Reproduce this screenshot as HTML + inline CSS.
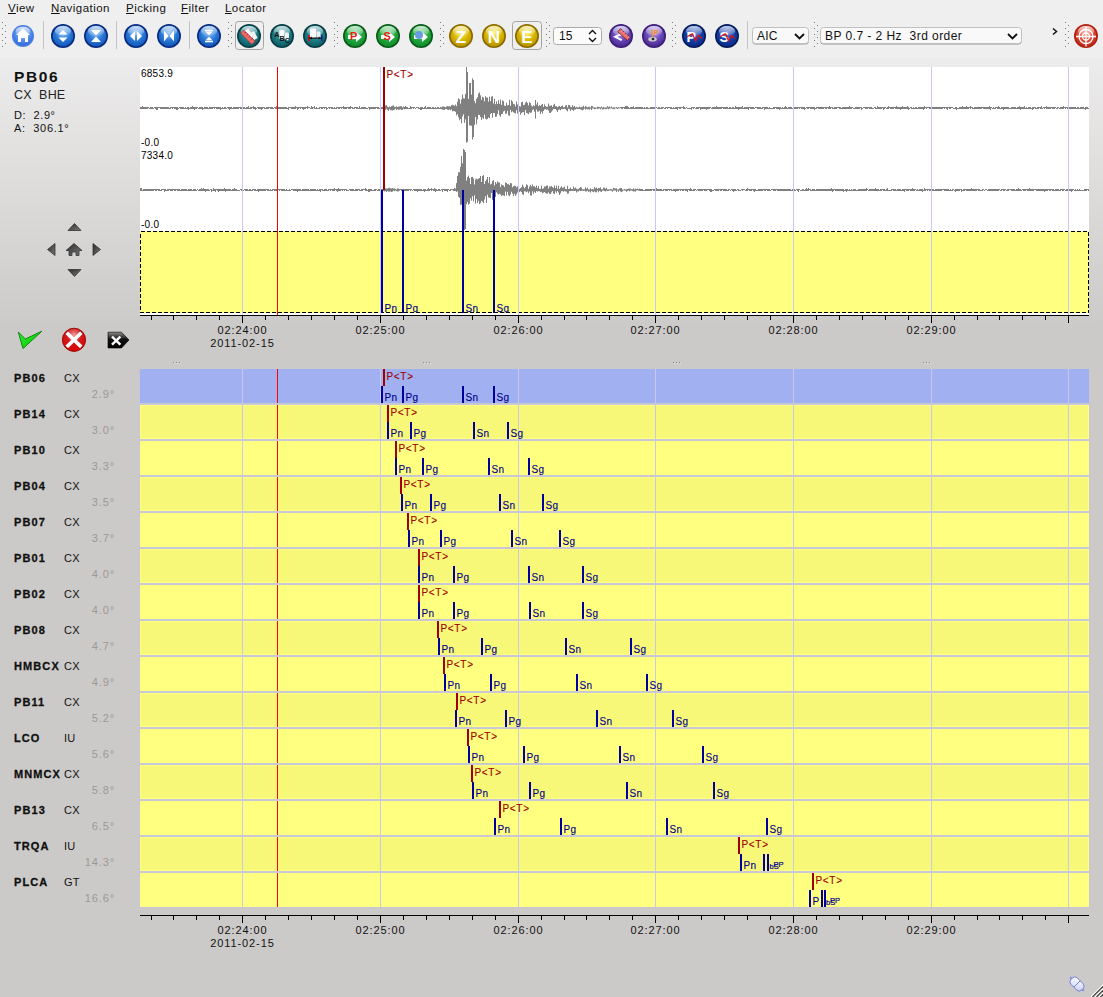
<!DOCTYPE html><html><head><meta charset="utf-8"><style>
html,body{margin:0;padding:0;}
body{width:1103px;height:997px;overflow:hidden;position:relative;background:#cccac8;font-family:"Liberation Sans", sans-serif;}
.t{position:absolute;white-space:pre;line-height:1;}
svg{position:absolute;left:0;top:0;}
</style></head><body>

<div style="position:absolute;left:0;top:0;width:1103px;height:58px;background:#efefef"></div>
<div style="position:absolute;left:0;top:58px;width:1103px;height:272px;background:linear-gradient(#edecec,#cccac8)"></div>
<div class="t" style="left:14px;top:373px;font-size:11px;font-weight:bold;color:#111;letter-spacing:1.1px;-webkit-text-stroke:0.3px #111">PB06</div>
<div class="t" style="left:64px;top:373px;font-size:11px;color:#111;letter-spacing:0.3px">CX</div>
<div class="t" style="right:988px;top:389px;font-size:11px;color:#999;letter-spacing:0.9px">2.9°</div>
<div class="t" style="left:14px;top:409px;font-size:11px;font-weight:bold;color:#111;letter-spacing:1.1px;-webkit-text-stroke:0.3px #111">PB14</div>
<div class="t" style="left:64px;top:409px;font-size:11px;color:#111;letter-spacing:0.3px">CX</div>
<div class="t" style="right:988px;top:425px;font-size:11px;color:#999;letter-spacing:0.9px">3.0°</div>
<div class="t" style="left:14px;top:445px;font-size:11px;font-weight:bold;color:#111;letter-spacing:1.1px;-webkit-text-stroke:0.3px #111">PB10</div>
<div class="t" style="left:64px;top:445px;font-size:11px;color:#111;letter-spacing:0.3px">CX</div>
<div class="t" style="right:988px;top:461px;font-size:11px;color:#999;letter-spacing:0.9px">3.3°</div>
<div class="t" style="left:14px;top:481px;font-size:11px;font-weight:bold;color:#111;letter-spacing:1.1px;-webkit-text-stroke:0.3px #111">PB04</div>
<div class="t" style="left:64px;top:481px;font-size:11px;color:#111;letter-spacing:0.3px">CX</div>
<div class="t" style="right:988px;top:497px;font-size:11px;color:#999;letter-spacing:0.9px">3.5°</div>
<div class="t" style="left:14px;top:517px;font-size:11px;font-weight:bold;color:#111;letter-spacing:1.1px;-webkit-text-stroke:0.3px #111">PB07</div>
<div class="t" style="left:64px;top:517px;font-size:11px;color:#111;letter-spacing:0.3px">CX</div>
<div class="t" style="right:988px;top:533px;font-size:11px;color:#999;letter-spacing:0.9px">3.7°</div>
<div class="t" style="left:14px;top:553px;font-size:11px;font-weight:bold;color:#111;letter-spacing:1.1px;-webkit-text-stroke:0.3px #111">PB01</div>
<div class="t" style="left:64px;top:553px;font-size:11px;color:#111;letter-spacing:0.3px">CX</div>
<div class="t" style="right:988px;top:569px;font-size:11px;color:#999;letter-spacing:0.9px">4.0°</div>
<div class="t" style="left:14px;top:589px;font-size:11px;font-weight:bold;color:#111;letter-spacing:1.1px;-webkit-text-stroke:0.3px #111">PB02</div>
<div class="t" style="left:64px;top:589px;font-size:11px;color:#111;letter-spacing:0.3px">CX</div>
<div class="t" style="right:988px;top:605px;font-size:11px;color:#999;letter-spacing:0.9px">4.0°</div>
<div class="t" style="left:14px;top:625px;font-size:11px;font-weight:bold;color:#111;letter-spacing:1.1px;-webkit-text-stroke:0.3px #111">PB08</div>
<div class="t" style="left:64px;top:625px;font-size:11px;color:#111;letter-spacing:0.3px">CX</div>
<div class="t" style="right:988px;top:641px;font-size:11px;color:#999;letter-spacing:0.9px">4.7°</div>
<div class="t" style="left:14px;top:661px;font-size:11px;font-weight:bold;color:#111;letter-spacing:1.1px;-webkit-text-stroke:0.3px #111">HMBCX</div>
<div class="t" style="left:64px;top:661px;font-size:11px;color:#111;letter-spacing:0.3px">CX</div>
<div class="t" style="right:988px;top:677px;font-size:11px;color:#999;letter-spacing:0.9px">4.9°</div>
<div class="t" style="left:14px;top:697px;font-size:11px;font-weight:bold;color:#111;letter-spacing:1.1px;-webkit-text-stroke:0.3px #111">PB11</div>
<div class="t" style="left:64px;top:697px;font-size:11px;color:#111;letter-spacing:0.3px">CX</div>
<div class="t" style="right:988px;top:713px;font-size:11px;color:#999;letter-spacing:0.9px">5.2°</div>
<div class="t" style="left:14px;top:733px;font-size:11px;font-weight:bold;color:#111;letter-spacing:1.1px;-webkit-text-stroke:0.3px #111">LCO</div>
<div class="t" style="left:64px;top:733px;font-size:11px;color:#111;letter-spacing:0.3px">IU</div>
<div class="t" style="right:988px;top:749px;font-size:11px;color:#999;letter-spacing:0.9px">5.6°</div>
<div class="t" style="left:14px;top:769px;font-size:11px;font-weight:bold;color:#111;letter-spacing:1.1px;-webkit-text-stroke:0.3px #111">MNMCX</div>
<div class="t" style="left:64px;top:769px;font-size:11px;color:#111;letter-spacing:0.3px">CX</div>
<div class="t" style="right:988px;top:785px;font-size:11px;color:#999;letter-spacing:0.9px">5.8°</div>
<div class="t" style="left:14px;top:805px;font-size:11px;font-weight:bold;color:#111;letter-spacing:1.1px;-webkit-text-stroke:0.3px #111">PB13</div>
<div class="t" style="left:64px;top:805px;font-size:11px;color:#111;letter-spacing:0.3px">CX</div>
<div class="t" style="right:988px;top:821px;font-size:11px;color:#999;letter-spacing:0.9px">6.5°</div>
<div class="t" style="left:14px;top:841px;font-size:11px;font-weight:bold;color:#111;letter-spacing:1.1px;-webkit-text-stroke:0.3px #111">TRQA</div>
<div class="t" style="left:64px;top:841px;font-size:11px;color:#111;letter-spacing:0.3px">IU</div>
<div class="t" style="right:988px;top:857px;font-size:11px;color:#999;letter-spacing:0.9px">14.3°</div>
<div class="t" style="left:14px;top:877px;font-size:11px;font-weight:bold;color:#111;letter-spacing:1.1px;-webkit-text-stroke:0.3px #111">PLCA</div>
<div class="t" style="left:64px;top:877px;font-size:11px;color:#111;letter-spacing:0.3px">GT</div>
<div class="t" style="right:988px;top:893px;font-size:11px;color:#999;letter-spacing:0.9px">16.6°</div>
<svg width="1103" height="997" viewBox="0 0 1103 997"><rect x="2" y="22" width="1" height="1" fill="#7a7a7a"/><rect x="5" y="25" width="1" height="1" fill="#7a7a7a"/><rect x="2" y="28" width="1" height="1" fill="#7a7a7a"/><rect x="5" y="31" width="1" height="1" fill="#7a7a7a"/><rect x="2" y="34" width="1" height="1" fill="#7a7a7a"/><rect x="5" y="37" width="1" height="1" fill="#7a7a7a"/><rect x="2" y="40" width="1" height="1" fill="#7a7a7a"/><rect x="5" y="43" width="1" height="1" fill="#7a7a7a"/><rect x="2" y="46" width="1" height="1" fill="#7a7a7a"/><defs><radialGradient id="g0" cx="0.5" cy="0.35" r="0.65"><stop offset="0" stop-color="#9cc0fa"/><stop offset="0.55" stop-color="#5d92ee"/><stop offset="1" stop-color="#2f6ad8"/></radialGradient>
<linearGradient id="g0h" x1="0" y1="0" x2="0" y2="1"><stop offset="0" stop-color="#fff" stop-opacity="0.75"/><stop offset="1" stop-color="#fff" stop-opacity="0.05"/></linearGradient></defs>
<circle cx="23" cy="36" r="11" fill="#4a7fe0"/>
<circle cx="23" cy="36" r="9.4" fill="url(#g0)"/>
<ellipse cx="23" cy="31.38" rx="7.48" ry="4.62" fill="url(#g0h)"/><path d="M23 28.5 L30 35 L28 35 L28 42 L25 42 L25 38 L21 38 L21 42 L18 42 L18 35 L16 35 Z" fill="#fff"/><rect x="43" y="21" width="1" height="28" fill="#c4c4c4"/><defs><radialGradient id="g1" cx="0.5" cy="0.35" r="0.65"><stop offset="0" stop-color="#90c0f4"/><stop offset="0.55" stop-color="#2a7ad8"/><stop offset="1" stop-color="#1256b8"/></radialGradient>
<linearGradient id="g1h" x1="0" y1="0" x2="0" y2="1"><stop offset="0" stop-color="#fff" stop-opacity="0.75"/><stop offset="1" stop-color="#fff" stop-opacity="0.05"/></linearGradient></defs>
<circle cx="63" cy="36" r="12" fill="#0a2a80"/>
<circle cx="63" cy="36" r="10.4" fill="url(#g1)"/>
<ellipse cx="63" cy="30.96" rx="8.16" ry="5.04" fill="url(#g1h)"/><path d="M63 30 L67.5 34.5 L58.5 34.5 Z M63 42 L67.5 37.5 L58.5 37.5 Z" fill="#fff"/><defs><radialGradient id="g2" cx="0.5" cy="0.35" r="0.65"><stop offset="0" stop-color="#90c0f4"/><stop offset="0.55" stop-color="#2a7ad8"/><stop offset="1" stop-color="#1256b8"/></radialGradient>
<linearGradient id="g2h" x1="0" y1="0" x2="0" y2="1"><stop offset="0" stop-color="#fff" stop-opacity="0.75"/><stop offset="1" stop-color="#fff" stop-opacity="0.05"/></linearGradient></defs>
<circle cx="96" cy="36" r="12" fill="#0a2a80"/>
<circle cx="96" cy="36" r="10.4" fill="url(#g2)"/>
<ellipse cx="96" cy="30.96" rx="8.16" ry="5.04" fill="url(#g2h)"/><path d="M91 30 L101 30 L96 35.5 Z M91 42 L101 42 L96 36.5 Z" fill="#fff"/><rect x="116" y="21" width="1" height="28" fill="#c4c4c4"/><defs><radialGradient id="g3" cx="0.5" cy="0.35" r="0.65"><stop offset="0" stop-color="#90c0f4"/><stop offset="0.55" stop-color="#2a7ad8"/><stop offset="1" stop-color="#1256b8"/></radialGradient>
<linearGradient id="g3h" x1="0" y1="0" x2="0" y2="1"><stop offset="0" stop-color="#fff" stop-opacity="0.75"/><stop offset="1" stop-color="#fff" stop-opacity="0.05"/></linearGradient></defs>
<circle cx="136" cy="36" r="12" fill="#0a2a80"/>
<circle cx="136" cy="36" r="10.4" fill="url(#g3)"/>
<ellipse cx="136" cy="30.96" rx="8.16" ry="5.04" fill="url(#g3h)"/><path d="M130 36 L135 31 L135 41 Z M142 36 L137 31 L137 41 Z" fill="#fff"/><defs><radialGradient id="g4" cx="0.5" cy="0.35" r="0.65"><stop offset="0" stop-color="#90c0f4"/><stop offset="0.55" stop-color="#2a7ad8"/><stop offset="1" stop-color="#1256b8"/></radialGradient>
<linearGradient id="g4h" x1="0" y1="0" x2="0" y2="1"><stop offset="0" stop-color="#fff" stop-opacity="0.75"/><stop offset="1" stop-color="#fff" stop-opacity="0.05"/></linearGradient></defs>
<circle cx="169" cy="36" r="12" fill="#0a2a80"/>
<circle cx="169" cy="36" r="10.4" fill="url(#g4)"/>
<ellipse cx="169" cy="30.96" rx="8.16" ry="5.04" fill="url(#g4h)"/><path d="M164 30.5 L168.5 36 L164 41.5 Z M174 30.5 L169.5 36 L174 41.5 Z" fill="#fff"/><rect x="189" y="21" width="1" height="28" fill="#c4c4c4"/><defs><radialGradient id="g5" cx="0.5" cy="0.35" r="0.65"><stop offset="0" stop-color="#90c0f4"/><stop offset="0.55" stop-color="#2a7ad8"/><stop offset="1" stop-color="#1256b8"/></radialGradient>
<linearGradient id="g5h" x1="0" y1="0" x2="0" y2="1"><stop offset="0" stop-color="#fff" stop-opacity="0.75"/><stop offset="1" stop-color="#fff" stop-opacity="0.05"/></linearGradient></defs>
<circle cx="209" cy="36" r="12" fill="#0a2a80"/>
<circle cx="209" cy="36" r="10.4" fill="url(#g5)"/>
<ellipse cx="209" cy="30.96" rx="8.16" ry="5.04" fill="url(#g5h)"/><path d="M205.3 31.6 L212.7 31.6 L209 35.2 Z M205.3 40.4 L212.7 40.4 L209 36.8 Z" fill="#fff"/><rect x="205" y="29.8" width="8" height="1.3" fill="#fff"/><rect x="205" y="41" width="8" height="1.3" fill="#fff"/><rect x="228" y="22" width="1" height="1" fill="#7a7a7a"/><rect x="231" y="25" width="1" height="1" fill="#7a7a7a"/><rect x="228" y="28" width="1" height="1" fill="#7a7a7a"/><rect x="231" y="31" width="1" height="1" fill="#7a7a7a"/><rect x="228" y="34" width="1" height="1" fill="#7a7a7a"/><rect x="231" y="37" width="1" height="1" fill="#7a7a7a"/><rect x="228" y="40" width="1" height="1" fill="#7a7a7a"/><rect x="231" y="43" width="1" height="1" fill="#7a7a7a"/><rect x="228" y="46" width="1" height="1" fill="#7a7a7a"/><rect x="235.5" y="21.5" width="28" height="28" rx="3" fill="#efefef" stroke="#a4a4a4"/><defs><radialGradient id="t0" cx="0.5" cy="0.35" r="0.65"><stop offset="0" stop-color="#7ab8be"/><stop offset="0.55" stop-color="#1e7f88"/><stop offset="1" stop-color="#0d5a62"/></radialGradient>
<linearGradient id="t0h" x1="0" y1="0" x2="0" y2="1"><stop offset="0" stop-color="#fff" stop-opacity="0.75"/><stop offset="1" stop-color="#fff" stop-opacity="0.05"/></linearGradient></defs>
<circle cx="249" cy="36" r="12" fill="#083c44"/>
<circle cx="249" cy="36" r="10.4" fill="url(#t0)"/>
<ellipse cx="249" cy="30.96" rx="8.16" ry="5.04" fill="url(#t0h)"/><defs><radialGradient id="t1" cx="0.5" cy="0.35" r="0.65"><stop offset="0" stop-color="#7ab8be"/><stop offset="0.55" stop-color="#1e7f88"/><stop offset="1" stop-color="#0d5a62"/></radialGradient>
<linearGradient id="t1h" x1="0" y1="0" x2="0" y2="1"><stop offset="0" stop-color="#fff" stop-opacity="0.75"/><stop offset="1" stop-color="#fff" stop-opacity="0.05"/></linearGradient></defs>
<circle cx="282" cy="36" r="12" fill="#083c44"/>
<circle cx="282" cy="36" r="10.4" fill="url(#t1)"/>
<ellipse cx="282" cy="30.96" rx="8.16" ry="5.04" fill="url(#t1h)"/><defs><radialGradient id="t2" cx="0.5" cy="0.35" r="0.65"><stop offset="0" stop-color="#7ab8be"/><stop offset="0.55" stop-color="#1e7f88"/><stop offset="1" stop-color="#0d5a62"/></radialGradient>
<linearGradient id="t2h" x1="0" y1="0" x2="0" y2="1"><stop offset="0" stop-color="#fff" stop-opacity="0.75"/><stop offset="1" stop-color="#fff" stop-opacity="0.05"/></linearGradient></defs>
<circle cx="315" cy="36" r="12" fill="#083c44"/>
<circle cx="315" cy="36" r="10.4" fill="url(#t2)"/>
<ellipse cx="315" cy="30.96" rx="8.16" ry="5.04" fill="url(#t2h)"/><g transform="rotate(-8 249 36)"><rect x="246" y="29.5" width="5.5" height="9.5" rx="1" fill="#fafafa" transform="rotate(-20 248 34)"/><rect x="251.5" y="32.5" width="4.5" height="8" rx="1" fill="#f0f0f0" transform="rotate(-20 253 36)"/></g><g transform="rotate(45 248 37)"><rect x="240" y="35" width="16" height="4.5" fill="#f06868" stroke="#902020" stroke-width="0.5"/><path d="M243 35 V36.5 M246 35 V36.5 M249 35 V36.5 M252 35 V36.5" stroke="#600" stroke-width="0.7"/></g><rect x="279.3" y="30" width="5.2" height="9.2" rx="1" fill="#fafafa"/><rect x="285" y="32.5" width="4" height="7.8" rx="1" fill="#f0f0f0"/><text x="274.3" y="37" font-size="7" font-weight="bold" fill="#111" font-family="Liberation Sans">A</text><text x="279.6" y="40.6" font-size="7" font-weight="bold" fill="#111" font-family="Liberation Sans">B</text><text x="284.8" y="42.6" font-size="7" font-weight="bold" fill="#111" font-family="Liberation Sans">C</text><rect x="310" y="28.5" width="6" height="9.5" rx="1" fill="#fafafa"/><rect x="316.5" y="31.5" width="4" height="7" rx="1" fill="#f0f0f0"/><rect x="308" y="35" width="1.6" height="6" fill="#e00"/><rect x="321" y="35" width="1.6" height="6" fill="#22a"/><rect x="309" y="37.5" width="13" height="1.2" fill="#111"/><path d="M310 38.1 L312 36.6 L312 39.6 Z M320.6 38.1 L318.6 36.6 L318.6 39.6 Z" fill="#111"/><rect x="334" y="22" width="1" height="1" fill="#7a7a7a"/><rect x="337" y="25" width="1" height="1" fill="#7a7a7a"/><rect x="334" y="28" width="1" height="1" fill="#7a7a7a"/><rect x="337" y="31" width="1" height="1" fill="#7a7a7a"/><rect x="334" y="34" width="1" height="1" fill="#7a7a7a"/><rect x="337" y="37" width="1" height="1" fill="#7a7a7a"/><rect x="334" y="40" width="1" height="1" fill="#7a7a7a"/><rect x="337" y="43" width="1" height="1" fill="#7a7a7a"/><rect x="334" y="46" width="1" height="1" fill="#7a7a7a"/><defs><radialGradient id="n0" cx="0.5" cy="0.35" r="0.65"><stop offset="0" stop-color="#8fe0a0"/><stop offset="0.55" stop-color="#22a83e"/><stop offset="1" stop-color="#0f8a2a"/></radialGradient>
<linearGradient id="n0h" x1="0" y1="0" x2="0" y2="1"><stop offset="0" stop-color="#fff" stop-opacity="0.75"/><stop offset="1" stop-color="#fff" stop-opacity="0.05"/></linearGradient></defs>
<circle cx="355" cy="36" r="12" fill="#0a5a1a"/>
<circle cx="355" cy="36" r="10.4" fill="url(#n0)"/>
<ellipse cx="355" cy="30.96" rx="8.16" ry="5.04" fill="url(#n0h)"/><defs><radialGradient id="n1" cx="0.5" cy="0.35" r="0.65"><stop offset="0" stop-color="#8fe0a0"/><stop offset="0.55" stop-color="#22a83e"/><stop offset="1" stop-color="#0f8a2a"/></radialGradient>
<linearGradient id="n1h" x1="0" y1="0" x2="0" y2="1"><stop offset="0" stop-color="#fff" stop-opacity="0.75"/><stop offset="1" stop-color="#fff" stop-opacity="0.05"/></linearGradient></defs>
<circle cx="388" cy="36" r="12" fill="#0a5a1a"/>
<circle cx="388" cy="36" r="10.4" fill="url(#n1)"/>
<ellipse cx="388" cy="30.96" rx="8.16" ry="5.04" fill="url(#n1h)"/><defs><radialGradient id="n2" cx="0.5" cy="0.35" r="0.65"><stop offset="0" stop-color="#8fe0a0"/><stop offset="0.55" stop-color="#22a83e"/><stop offset="1" stop-color="#0f8a2a"/></radialGradient>
<linearGradient id="n2h" x1="0" y1="0" x2="0" y2="1"><stop offset="0" stop-color="#fff" stop-opacity="0.75"/><stop offset="1" stop-color="#fff" stop-opacity="0.05"/></linearGradient></defs>
<circle cx="421" cy="36" r="12" fill="#0a5a1a"/>
<circle cx="421" cy="36" r="10.4" fill="url(#n2)"/>
<ellipse cx="421" cy="30.96" rx="8.16" ry="5.04" fill="url(#n2h)"/><path d="M348 35 L356 35 L356 32 L362 37 L356 42 L356 39 L348 39 Z" fill="#fff"/><text x="350" y="40" font-size="11" font-weight="bold" fill="#e21" font-family="Liberation Sans">P</text><path d="M381 35 L389 35 L389 32 L395 37 L389 42 L389 39 L381 39 Z" fill="#fff"/><text x="383.5" y="40" font-size="11" font-weight="bold" fill="#e21" font-family="Liberation Sans">S</text><path d="M414 35 L422 35 L422 32 L428 37 L422 42 L422 39 L414 39 Z" fill="#fff"/><circle cx="419" cy="35" r="4" fill="#6a9ae0"/><rect x="440" y="22" width="1" height="1" fill="#7a7a7a"/><rect x="443" y="25" width="1" height="1" fill="#7a7a7a"/><rect x="440" y="28" width="1" height="1" fill="#7a7a7a"/><rect x="443" y="31" width="1" height="1" fill="#7a7a7a"/><rect x="440" y="34" width="1" height="1" fill="#7a7a7a"/><rect x="443" y="37" width="1" height="1" fill="#7a7a7a"/><rect x="440" y="40" width="1" height="1" fill="#7a7a7a"/><rect x="443" y="43" width="1" height="1" fill="#7a7a7a"/><rect x="440" y="46" width="1" height="1" fill="#7a7a7a"/><defs><radialGradient id="y0" cx="0.5" cy="0.35" r="0.65"><stop offset="0" stop-color="#fff070"/><stop offset="0.55" stop-color="#d8b800"/><stop offset="1" stop-color="#b89400"/></radialGradient>
<linearGradient id="y0h" x1="0" y1="0" x2="0" y2="1"><stop offset="0" stop-color="#fff" stop-opacity="0.75"/><stop offset="1" stop-color="#fff" stop-opacity="0.05"/></linearGradient></defs>
<circle cx="461" cy="36" r="12" fill="#8a6a00"/>
<circle cx="461" cy="36" r="10.4" fill="url(#y0)"/>
<ellipse cx="461" cy="30.96" rx="8.16" ry="5.04" fill="url(#y0h)"/><text x="461" y="42.5" font-size="17" font-weight="bold" fill="#fff" text-anchor="middle" font-family="Liberation Sans">Z</text><defs><radialGradient id="y1" cx="0.5" cy="0.35" r="0.65"><stop offset="0" stop-color="#fff070"/><stop offset="0.55" stop-color="#d8b800"/><stop offset="1" stop-color="#b89400"/></radialGradient>
<linearGradient id="y1h" x1="0" y1="0" x2="0" y2="1"><stop offset="0" stop-color="#fff" stop-opacity="0.75"/><stop offset="1" stop-color="#fff" stop-opacity="0.05"/></linearGradient></defs>
<circle cx="494" cy="36" r="12" fill="#8a6a00"/>
<circle cx="494" cy="36" r="10.4" fill="url(#y1)"/>
<ellipse cx="494" cy="30.96" rx="8.16" ry="5.04" fill="url(#y1h)"/><text x="494" y="42.5" font-size="17" font-weight="bold" fill="#fff" text-anchor="middle" font-family="Liberation Sans">N</text><rect x="512.5" y="21.5" width="29" height="28" rx="3" fill="#efefef" stroke="#a4a4a4"/><defs><radialGradient id="y2" cx="0.5" cy="0.35" r="0.65"><stop offset="0" stop-color="#fff070"/><stop offset="0.55" stop-color="#d8b800"/><stop offset="1" stop-color="#b89400"/></radialGradient>
<linearGradient id="y2h" x1="0" y1="0" x2="0" y2="1"><stop offset="0" stop-color="#fff" stop-opacity="0.75"/><stop offset="1" stop-color="#fff" stop-opacity="0.05"/></linearGradient></defs>
<circle cx="527" cy="36" r="12" fill="#8a6a00"/>
<circle cx="527" cy="36" r="10.4" fill="url(#y2)"/>
<ellipse cx="527" cy="30.96" rx="8.16" ry="5.04" fill="url(#y2h)"/><text x="527" y="42.5" font-size="17" font-weight="bold" fill="#fff" text-anchor="middle" font-family="Liberation Sans">E</text><rect x="546" y="22" width="1" height="1" fill="#7a7a7a"/><rect x="549" y="25" width="1" height="1" fill="#7a7a7a"/><rect x="546" y="28" width="1" height="1" fill="#7a7a7a"/><rect x="549" y="31" width="1" height="1" fill="#7a7a7a"/><rect x="546" y="34" width="1" height="1" fill="#7a7a7a"/><rect x="549" y="37" width="1" height="1" fill="#7a7a7a"/><rect x="546" y="40" width="1" height="1" fill="#7a7a7a"/><rect x="549" y="43" width="1" height="1" fill="#7a7a7a"/><rect x="546" y="46" width="1" height="1" fill="#7a7a7a"/><rect x="553.5" y="27.5" width="48" height="17" rx="3" fill="#fbfbfb" stroke="#aaa"/><text x="559" y="40" font-size="12" fill="#111" font-family="Liberation Sans">15</text><path d="M589 34 L592.5 30.5 L596 34 M589 38 L592.5 41.5 L596 38" fill="none" stroke="#111" stroke-width="1.4"/><defs><radialGradient id="p0" cx="0.5" cy="0.35" r="0.65"><stop offset="0" stop-color="#b8a0e8"/><stop offset="0.55" stop-color="#6a48b8"/><stop offset="1" stop-color="#4a2a90"/></radialGradient>
<linearGradient id="p0h" x1="0" y1="0" x2="0" y2="1"><stop offset="0" stop-color="#fff" stop-opacity="0.75"/><stop offset="1" stop-color="#fff" stop-opacity="0.05"/></linearGradient></defs>
<circle cx="621" cy="36" r="12" fill="#3a1e78"/>
<circle cx="621" cy="36" r="10.4" fill="url(#p0)"/>
<ellipse cx="621" cy="30.96" rx="8.16" ry="5.04" fill="url(#p0h)"/><defs><radialGradient id="p1" cx="0.5" cy="0.35" r="0.65"><stop offset="0" stop-color="#b8a0e8"/><stop offset="0.55" stop-color="#6a48b8"/><stop offset="1" stop-color="#4a2a90"/></radialGradient>
<linearGradient id="p1h" x1="0" y1="0" x2="0" y2="1"><stop offset="0" stop-color="#fff" stop-opacity="0.75"/><stop offset="1" stop-color="#fff" stop-opacity="0.05"/></linearGradient></defs>
<circle cx="654" cy="36" r="12" fill="#3a1e78"/>
<circle cx="654" cy="36" r="10.4" fill="url(#p1)"/>
<ellipse cx="654" cy="30.96" rx="8.16" ry="5.04" fill="url(#p1h)"/><path d="M621.7 33.9 L615.2 36.9 L621.7 40.2" fill="none" stroke="#fff" stroke-width="2"/><g transform="rotate(42 624 34.5)"><rect x="617.5" y="32.5" width="13" height="4.2" fill="#f06a6a" stroke="#401020" stroke-width="0.6"/><path d="M620 32.5 V34 M623 32.5 V34 M626 32.5 V34 M629 32.5 V34" stroke="#fff" stroke-width="0.6"/></g><text x="651.3" y="35" font-size="7.5" font-weight="bold" fill="#ff8a10" font-family="Liberation Sans">IP</text><rect x="652" y="35" width="1.2" height="2" fill="#ff8a10"/><ellipse cx="652.5" cy="39.2" rx="4.2" ry="2.3" fill="#c8c8c8"/><circle cx="653" cy="39" r="1.3" fill="#222"/><rect x="672" y="22" width="1" height="1" fill="#7a7a7a"/><rect x="675" y="25" width="1" height="1" fill="#7a7a7a"/><rect x="672" y="28" width="1" height="1" fill="#7a7a7a"/><rect x="675" y="31" width="1" height="1" fill="#7a7a7a"/><rect x="672" y="34" width="1" height="1" fill="#7a7a7a"/><rect x="675" y="37" width="1" height="1" fill="#7a7a7a"/><rect x="672" y="40" width="1" height="1" fill="#7a7a7a"/><rect x="675" y="43" width="1" height="1" fill="#7a7a7a"/><rect x="672" y="46" width="1" height="1" fill="#7a7a7a"/><defs><radialGradient id="b0" cx="0.5" cy="0.35" r="0.65"><stop offset="0" stop-color="#6080d0"/><stop offset="0.55" stop-color="#1040a8"/><stop offset="1" stop-color="#0a2a8a"/></radialGradient>
<linearGradient id="b0h" x1="0" y1="0" x2="0" y2="1"><stop offset="0" stop-color="#fff" stop-opacity="0.75"/><stop offset="1" stop-color="#fff" stop-opacity="0.05"/></linearGradient></defs>
<circle cx="694" cy="36" r="12" fill="#061a5a"/>
<circle cx="694" cy="36" r="10.4" fill="url(#b0)"/>
<ellipse cx="694" cy="30.96" rx="8.16" ry="5.04" fill="url(#b0h)"/><text x="686.5" y="41.5" font-size="14" font-weight="bold" fill="#fff" font-family="Liberation Sans">P</text><path d="M686.5 37 L692.5 33.8 L695.5 41 L698.5 35.2 L702 38.6" fill="none" stroke="#e81010" stroke-width="1.2" stroke-linejoin="round"/><defs><radialGradient id="b1" cx="0.5" cy="0.35" r="0.65"><stop offset="0" stop-color="#6080d0"/><stop offset="0.55" stop-color="#1040a8"/><stop offset="1" stop-color="#0a2a8a"/></radialGradient>
<linearGradient id="b1h" x1="0" y1="0" x2="0" y2="1"><stop offset="0" stop-color="#fff" stop-opacity="0.75"/><stop offset="1" stop-color="#fff" stop-opacity="0.05"/></linearGradient></defs>
<circle cx="727" cy="36" r="12" fill="#061a5a"/>
<circle cx="727" cy="36" r="10.4" fill="url(#b1)"/>
<ellipse cx="727" cy="30.96" rx="8.16" ry="5.04" fill="url(#b1h)"/><text x="719.5" y="41.5" font-size="14" font-weight="bold" fill="#fff" font-family="Liberation Sans">S</text><path d="M719.5 37 L725.5 33.8 L728.5 41 L731.5 35.2 L735 38.6" fill="none" stroke="#e81010" stroke-width="1.2" stroke-linejoin="round"/><rect x="747" y="21" width="1" height="28" fill="#c4c4c4"/><rect x="752.5" y="28.5" width="56" height="16" rx="3" fill="#9a9a9a"/><rect x="752.5" y="27.5" width="56" height="16" rx="3" fill="#f9f9f9" stroke="#c0c0c0"/><text x="757" y="39.5" font-size="12" fill="#111" font-family="Liberation Sans" letter-spacing="0.2">AIC</text><path d="M795 34 L799.5 38.5 L804 34" fill="none" stroke="#111" stroke-width="1.8"/><rect x="814" y="22" width="1" height="1" fill="#7a7a7a"/><rect x="817" y="25" width="1" height="1" fill="#7a7a7a"/><rect x="814" y="28" width="1" height="1" fill="#7a7a7a"/><rect x="817" y="31" width="1" height="1" fill="#7a7a7a"/><rect x="814" y="34" width="1" height="1" fill="#7a7a7a"/><rect x="817" y="37" width="1" height="1" fill="#7a7a7a"/><rect x="814" y="40" width="1" height="1" fill="#7a7a7a"/><rect x="817" y="43" width="1" height="1" fill="#7a7a7a"/><rect x="814" y="46" width="1" height="1" fill="#7a7a7a"/><rect x="820.5" y="28.5" width="201" height="16" rx="3" fill="#9a9a9a"/><rect x="820.5" y="27.5" width="201" height="16" rx="3" fill="#f9f9f9" stroke="#c0c0c0"/><text x="825" y="39.5" font-size="12" fill="#111" font-family="Liberation Sans" letter-spacing="0.45">BP 0.7 - 2 Hz&#160; 3rd order</text><path d="M1008 34 L1012.5 38.5 L1017 34" fill="none" stroke="#111" stroke-width="1.8"/><path d="M1053 28.5 L1056.5 31.5 L1053 34.5" fill="none" stroke="#111" stroke-width="1.5"/><rect x="1065" y="22" width="1" height="1" fill="#7a7a7a"/><rect x="1068" y="25" width="1" height="1" fill="#7a7a7a"/><rect x="1065" y="28" width="1" height="1" fill="#7a7a7a"/><rect x="1068" y="31" width="1" height="1" fill="#7a7a7a"/><rect x="1065" y="34" width="1" height="1" fill="#7a7a7a"/><rect x="1068" y="37" width="1" height="1" fill="#7a7a7a"/><rect x="1065" y="40" width="1" height="1" fill="#7a7a7a"/><rect x="1068" y="43" width="1" height="1" fill="#7a7a7a"/><rect x="1065" y="46" width="1" height="1" fill="#7a7a7a"/><defs><radialGradient id="r0" cx="0.5" cy="0.35" r="0.65"><stop offset="0" stop-color="#ff9a88"/><stop offset="0.55" stop-color="#e04a38"/><stop offset="1" stop-color="#c02818"/></radialGradient>
<linearGradient id="r0h" x1="0" y1="0" x2="0" y2="1"><stop offset="0" stop-color="#fff" stop-opacity="0.75"/><stop offset="1" stop-color="#fff" stop-opacity="0.05"/></linearGradient></defs>
<circle cx="1086" cy="36" r="12" fill="#b02010"/>
<circle cx="1086" cy="36" r="10.4" fill="url(#r0)"/>
<ellipse cx="1086" cy="30.96" rx="8.16" ry="5.04" fill="url(#r0h)"/><circle cx="1086" cy="36.5" r="7" fill="none" stroke="#fff" stroke-width="1.3"/><circle cx="1086" cy="36.5" r="3.5" fill="none" stroke="#fff" stroke-width="1.3"/><path d="M1076 36.5 H1096 M1086 26.5 V46.5" stroke="#fff" stroke-width="1.3"/><rect x="140" y="67" width="949" height="164" fill="#fff"/><rect x="140" y="231" width="949" height="82" fill="#ffff80"/><path d="M140.5 107.0V109.0M141.5 107.0V109.0M142.5 106.0V109.0M143.5 107.0V109.0M144.5 107.0V109.0M145.5 107.0V109.0M146.5 107.0V109.0M147.5 107.0V109.0M148.5 107.0V108.0M149.5 108.0V109.0M150.5 107.0V109.0M151.5 107.0V109.0M152.5 107.0V109.0M153.5 108.0V109.0M154.5 107.0V108.0M155.5 107.0V109.0M156.5 107.0V110.0M157.5 107.0V110.0M158.5 107.0V108.0M159.5 107.0V108.0M160.5 107.0V109.0M161.5 107.0V109.0M162.5 107.0V109.0M163.5 107.0V109.0M164.5 107.0V109.0M165.5 107.0V109.0M166.5 107.0V109.0M167.5 107.0V109.0M168.5 107.0V109.0M169.5 108.0V109.0M170.5 107.0V109.0M171.5 107.0V108.0M172.5 107.0V109.0M173.5 107.0V108.0M174.5 107.0V109.0M175.5 107.0V109.0M176.5 107.0V110.0M177.5 107.0V110.0M178.5 108.0V109.0M179.5 107.0V108.0M180.5 107.0V109.0M181.5 107.0V109.0M182.5 107.0V109.0M183.5 107.0V109.0M184.5 108.0V109.0M185.5 107.0V109.0M186.5 108.0V109.0M187.5 107.0V109.0M188.5 107.0V110.0M189.5 108.0V109.0M190.5 107.0V109.0M191.5 107.0V109.0M192.5 106.0V109.0M193.5 107.0V109.0M194.5 107.0V110.0M195.5 107.0V109.0M196.5 107.0V109.0M197.5 107.0V108.0M198.5 108.0V109.0M199.5 107.0V109.0M200.5 107.0V109.0M201.5 107.0V109.0M202.5 107.0V110.0M203.5 108.0V109.0M204.5 107.0V109.0M205.5 107.0V109.0M206.5 107.0V109.0M207.5 107.0V109.0M208.5 108.0V109.0M209.5 107.0V109.0M210.5 107.0V109.0M211.5 107.0V109.0M212.5 107.0V109.0M213.5 107.0V108.0M214.5 107.0V109.0M215.5 107.0V108.0M216.5 107.0V109.0M217.5 107.0V109.0M218.5 107.0V109.0M219.5 107.0V109.0M220.5 107.0V110.0M221.5 108.0V109.0M222.5 107.0V109.0M223.5 108.0V109.0M224.5 107.0V109.0M225.5 107.0V109.0M226.5 108.0V109.0M227.5 107.0V108.0M228.5 107.0V109.0M229.5 107.0V110.0M230.5 107.0V109.0M231.5 107.0V109.0M232.5 108.0V109.0M233.5 107.0V109.0M234.5 107.0V109.0M235.5 107.0V109.0M236.5 107.0V109.0M237.5 107.0V109.0M238.5 107.0V109.0M239.5 107.0V108.0M240.5 107.0V109.0M241.5 107.0V109.0M242.5 107.0V110.0M243.5 107.0V109.0M244.5 107.0V109.0M245.5 108.0V109.0M246.5 107.0V109.0M247.5 107.0V109.0M248.5 106.0V109.0M249.5 108.0V109.0M250.5 107.0V109.0M251.5 107.0V109.0M252.5 107.0V108.0M253.5 106.0V109.0M254.5 107.0V109.0M255.5 107.0V110.0M256.5 108.0V109.0M257.5 107.0V108.0M258.5 107.0V109.0M259.5 107.0V109.0M260.5 107.0V109.0M261.5 107.0V110.0M262.5 107.0V109.0M263.5 107.0V108.0M264.5 107.0V109.0M265.5 108.0V109.0M266.5 107.0V109.0M267.5 107.0V109.0M268.5 107.0V109.0M269.5 107.0V108.0M270.5 107.0V109.0M271.5 107.0V109.0M272.5 107.0V109.0M273.5 108.0V109.0M274.5 107.0V108.0M275.5 107.0V109.0M276.5 106.0V109.0M277.5 107.0V109.0M278.5 107.0V109.0M279.5 107.0V109.0M280.5 107.0V109.0M281.5 107.0V109.0M282.5 107.0V109.0M283.5 107.0V109.0M284.5 107.0V109.0M285.5 107.0V109.0M286.5 107.0V109.0M287.5 108.0V109.0M288.5 107.0V110.0M289.5 107.0V108.0M290.5 107.0V108.0M291.5 107.0V109.0M292.5 107.0V109.0M293.5 107.0V109.0M294.5 107.0V109.0M295.5 106.0V109.0M296.5 107.0V108.0M297.5 107.0V110.0M298.5 107.0V109.0M299.5 107.0V108.0M300.5 107.0V109.0M301.5 107.0V108.0M302.5 107.0V109.0M303.5 107.0V110.0M304.5 107.0V109.0M305.5 107.0V109.0M306.5 107.0V108.0M307.5 106.0V109.0M308.5 107.0V108.0M309.5 107.0V108.0M310.5 108.0V109.0M311.5 106.0V109.0M312.5 107.0V109.0M313.5 107.0V108.0M314.5 106.0V109.0M315.5 108.0V109.0M316.5 107.0V109.0M317.5 108.0V109.0M318.5 108.0V109.0M319.5 107.0V109.0M320.5 107.0V108.0M321.5 107.0V109.0M322.5 107.0V109.0M323.5 107.0V108.0M324.5 107.0V109.0M325.5 107.0V108.0M326.5 107.0V110.0M327.5 108.0V109.0M328.5 107.0V108.0M329.5 107.0V109.0M330.5 107.0V108.0M331.5 107.0V109.0M332.5 107.0V109.0M333.5 108.0V109.0M334.5 107.0V109.0M335.5 108.0V109.0M336.5 107.0V109.0M337.5 107.0V108.0M338.5 107.0V109.0M339.5 107.0V109.0M340.5 107.0V108.0M341.5 107.0V109.0M342.5 107.0V108.0M343.5 106.0V109.0M344.5 107.0V109.0M345.5 107.0V109.0M346.5 107.0V109.0M347.5 107.0V108.0M348.5 107.0V109.0M349.5 107.0V109.0M350.5 106.0V109.0M351.5 107.0V108.0M352.5 107.0V109.0M353.5 108.0V109.0M354.5 107.0V109.0M355.5 107.0V108.0M356.5 107.0V109.0M357.5 107.0V109.0M358.5 108.0V109.0M359.5 106.0V109.0M360.5 108.0V109.0M361.5 107.0V109.0M362.5 107.0V109.0M363.5 107.0V109.0M364.5 107.0V109.0M365.5 107.0V109.0M366.5 108.0V109.0M367.5 108.0V109.0M368.5 107.0V108.0M369.5 107.0V110.0M370.5 107.0V109.0M371.5 107.0V109.0M372.5 107.0V109.0M373.5 107.0V109.0M374.5 107.0V109.0M375.5 107.0V109.0M376.5 107.0V108.0M377.5 107.0V109.0M378.5 107.0V109.0M379.5 108.0V109.0M380.5 107.0V110.0M381.5 107.0V109.0M382.5 107.0V109.0M383.5 107.4V110.2M384.5 107.0V110.9M385.5 105.5V109.9M386.5 105.1V108.8M387.5 106.7V110.1M388.5 107.2V110.8M389.5 106.5V109.2M390.5 107.1V110.3M391.5 106.1V110.2M392.5 105.8V110.5M393.5 105.4V110.2M394.5 106.8V109.7M395.5 106.9V108.6M396.5 106.4V110.0M397.5 107.0V109.2M398.5 106.7V109.8M399.5 106.5V109.6M400.5 106.2V109.3M401.5 106.3V109.9M402.5 107.4V109.8M403.5 106.5V108.7M404.5 106.9V109.3M405.5 106.0V109.0M406.5 107.0V109.0M407.5 107.0V109.0M408.5 108.0V109.0M409.5 108.0V109.0M410.5 106.0V109.0M411.5 107.0V109.0M412.5 107.0V108.0M413.5 107.0V109.0M414.5 107.0V108.0M415.5 108.0V109.0M416.5 107.0V108.0M417.5 107.0V108.0M418.5 107.0V109.0M419.5 108.0V109.0M420.5 107.0V110.0M421.5 107.0V110.0M422.5 107.0V109.0M423.5 108.0V109.0M424.5 107.0V109.0M425.5 106.0V109.0M426.5 108.0V109.0M427.5 107.0V109.0M428.5 107.0V109.0M429.5 107.0V109.0M430.5 107.0V109.0M431.5 108.0V109.0M432.5 107.0V109.0M433.5 107.0V109.0M434.5 108.0V109.0M435.5 107.0V109.0M436.5 108.0V109.0M437.5 107.0V109.0M438.5 107.0V109.0M439.5 108.0V109.0M440.5 107.0V109.0M441.5 107.3V109.2M442.5 106.5V109.6M443.5 106.5V109.8M444.5 106.7V109.9M445.5 107.3V109.0M446.5 106.5V109.1M447.5 106.1V109.7M448.5 106.4V110.1M449.5 106.2V109.3M450.5 106.5V110.3M451.5 105.2V109.4M452.5 104.8V111.4M453.5 105.2V111.0M454.5 105.9V111.2M455.5 104.5V111.8M456.5 106.1V115.4M457.5 101.7V114.2M458.5 98.3V117.2M459.5 99.1V120.3M460.5 103.7V119.0M461.5 99.4V123.3M462.5 94.6V116.3M463.5 98.3V114.3M464.5 98.5V122.8M465.5 93.8V119.4M466.5 67.0V142.7M467.5 72.0V141.8M468.5 99.0V116.0M469.5 83.0V125.5M470.5 83.0V125.5M471.5 94.7V125.8M472.5 78.3V139.5M473.5 80.0V137.0M474.5 100.8V124.9M475.5 103.2V116.9M476.5 98.8V124.3M477.5 97.4V119.4M478.5 93.6V114.9M479.5 92.5V115.0M480.5 95.3V116.9M481.5 99.8V120.1M482.5 96.8V117.7M483.5 97.5V118.9M484.5 101.3V114.7M485.5 96.2V118.6M486.5 97.7V119.6M487.5 97.5V118.9M488.5 101.7V117.3M489.5 96.7V118.2M490.5 101.1V113.9M491.5 96.5V113.0M492.5 96.3V117.7M493.5 103.5V113.0M494.5 98.8V113.1M495.5 104.2V116.9M496.5 101.4V116.5M497.5 104.1V113.9M498.5 100.1V110.3M499.5 103.7V115.4M500.5 99.5V116.8M501.5 104.8V114.1M502.5 100.5V113.9M503.5 101.1V111.5M504.5 105.6V110.7M505.5 105.9V113.7M506.5 102.7V113.7M507.5 105.3V110.9M508.5 105.0V115.3M509.5 99.7V115.9M510.5 105.9V109.9M511.5 100.1V112.3M512.5 101.6V111.3M513.5 103.9V112.4M514.5 104.3V112.9M515.5 106.4V113.5M516.5 101.4V110.2M517.5 104.4V113.6M518.5 104.8V110.1M519.5 106.1V111.8M520.5 106.5V114.7M521.5 102.2V113.0M522.5 101.8V112.3M523.5 105.2V112.0M524.5 104.7V115.2M525.5 102.6V110.0M526.5 101.6V112.9M527.5 102.9V113.4M528.5 105.4V114.1M529.5 102.1V112.3M530.5 103.1V112.9M531.5 105.5V112.5M532.5 106.6V110.1M533.5 105.3V109.3M534.5 105.9V111.7M535.5 100.0V118.6M536.5 104.5V109.6M537.5 102.2V111.7M538.5 106.1V111.6M539.5 105.0V110.8M540.5 105.9V114.0M541.5 104.7V111.7M542.5 104.0V113.6M543.5 106.9V111.0M544.5 104.3V109.5M545.5 106.0V109.1M546.5 106.7V109.8M547.5 106.9V109.4M548.5 103.5V110.5M549.5 105.8V112.9M550.5 105.6V113.0M551.5 105.3V111.7M552.5 107.0V110.5M553.5 104.8V109.0M554.5 103.8V109.1M555.5 106.2V109.0M556.5 106.1V110.3M557.5 107.1V112.0M558.5 106.5V109.9M559.5 105.9V109.4M560.5 106.9V110.3M561.5 106.1V109.1M562.5 105.5V109.1M563.5 107.2V109.0M564.5 107.2V108.8M565.5 105.5V109.3M566.5 105.0V110.4M567.5 107.3V111.4M568.5 104.9V108.7M569.5 105.1V109.2M570.5 106.7V111.1M571.5 107.2V109.4M572.5 105.2V110.0M573.5 106.8V110.9M574.5 105.8V109.5M575.5 107.4V109.6M576.5 106.9V108.7M577.5 107.4V109.2M578.5 107.4V109.0M579.5 106.5V109.0M580.5 107.3V109.3M581.5 107.1V109.8M582.5 106.9V110.4M583.5 105.7V109.6M584.5 107.4V108.5M585.5 106.0V109.7M586.5 106.7V108.8M587.5 107.4V109.4M588.5 106.9V109.2M589.5 106.7V109.6M590.5 107.5V108.6M591.5 105.8V110.0M592.5 106.1V108.5M593.5 107.5V108.6M594.5 107.2V109.2M595.5 107.5V109.0M596.5 107.6V108.4M597.5 106.7V109.0M598.5 106.8V108.7M599.5 107.1V108.5M600.5 107.4V109.4M601.5 106.4V108.4M602.5 107.6V109.5M603.5 106.9V109.4M604.5 107.5V108.7M605.5 107.5V109.4M606.5 107.4V109.1M607.5 106.1V108.6M608.5 107.1V109.3M609.5 106.4V108.7M610.5 107.4V108.4M611.5 106.5V108.4M612.5 107.6V108.9M613.5 107.3V109.1M614.5 107.5V109.2M615.5 107.6V108.4M616.5 107.0V108.4M617.5 107.5V109.1M618.5 107.0V108.5M619.5 107.6V108.5M620.5 107.0V108.0M621.5 107.0V109.0M622.5 107.0V109.0M623.5 107.0V108.0M624.5 107.0V109.0M625.5 106.0V109.0M626.5 106.0V109.0M627.5 106.0V109.0M628.5 107.0V109.0M629.5 108.0V109.0M630.5 107.0V109.0M631.5 107.0V109.0M632.5 107.0V109.0M633.5 106.0V109.0M634.5 108.0V109.0M635.5 107.0V109.0M636.5 107.0V109.0M637.5 107.0V109.0M638.5 107.0V109.0M639.5 107.0V109.0M640.5 107.0V109.0M641.5 107.0V109.0M642.5 107.0V109.0M643.5 108.0V109.0M644.5 107.0V109.0M645.5 108.0V109.0M646.5 107.0V109.0M647.5 107.0V109.0M648.5 108.0V109.0M649.5 108.0V109.0M650.5 107.0V109.0M651.5 107.0V109.0M652.5 107.0V109.0M653.5 107.0V109.0M654.5 107.0V109.0M655.5 107.0V110.0M656.5 107.0V108.0M657.5 108.0V109.0M658.5 107.0V109.0M659.5 107.0V109.0M660.5 108.0V109.0M661.5 107.0V109.0M662.5 107.0V109.0M663.5 107.0V108.0M664.5 108.0V109.0M665.5 107.0V109.0M666.5 107.0V108.0M667.5 107.0V109.0M668.5 107.0V108.0M669.5 107.0V108.0M670.5 107.0V109.0M671.5 107.0V109.0M672.5 108.0V109.0M673.5 107.0V109.0M674.5 108.0V109.0M675.5 107.0V109.0M676.5 107.0V109.0M677.5 107.0V110.0M678.5 107.0V108.0M679.5 107.0V109.0M680.5 107.0V109.0M681.5 107.0V108.0M682.5 107.0V108.0M683.5 106.0V109.0M684.5 107.0V109.0M685.5 108.0V109.0M686.5 107.0V108.0M687.5 108.0V109.0M688.5 108.0V109.0M689.5 108.0V109.0M690.5 108.0V109.0M691.5 107.0V110.0M692.5 107.0V108.0M693.5 107.0V109.0M694.5 107.0V108.0M695.5 108.0V109.0M696.5 107.0V109.0M697.5 107.0V109.0M698.5 107.0V109.0M699.5 107.0V108.0M700.5 107.0V110.0M701.5 107.0V109.0M702.5 107.0V109.0M703.5 107.0V109.0M704.5 107.0V109.0M705.5 107.0V109.0M706.5 107.0V110.0M707.5 107.0V109.0M708.5 107.0V109.0M709.5 107.0V109.0M710.5 107.0V108.0M711.5 108.0V109.0M712.5 107.0V109.0M713.5 107.0V109.0M714.5 107.0V109.0M715.5 107.0V109.0M716.5 106.0V109.0M717.5 107.0V109.0M718.5 107.0V109.0M719.5 107.0V109.0M720.5 107.0V109.0M721.5 107.0V109.0M722.5 107.0V108.0M723.5 107.0V109.0M724.5 107.0V109.0M725.5 107.0V109.0M726.5 107.0V109.0M727.5 107.0V109.0M728.5 108.0V109.0M729.5 107.0V109.0M730.5 107.0V109.0M731.5 108.0V109.0M732.5 107.0V109.0M733.5 107.0V109.0M734.5 108.0V109.0M735.5 106.0V109.0M736.5 107.0V109.0M737.5 107.0V109.0M738.5 107.0V110.0M739.5 107.0V109.0M740.5 107.0V109.0M741.5 107.0V109.0M742.5 106.0V109.0M743.5 108.0V109.0M744.5 107.0V109.0M745.5 107.0V109.0M746.5 107.0V109.0M747.5 107.0V109.0M748.5 107.0V110.0M749.5 107.0V108.0M750.5 107.0V109.0M751.5 107.0V109.0M752.5 107.0V109.0M753.5 107.0V109.0M754.5 108.0V109.0M755.5 107.0V108.0M756.5 107.0V108.0M757.5 107.0V109.0M758.5 107.0V109.0M759.5 107.0V109.0M760.5 107.0V109.0M761.5 108.0V109.0M762.5 107.0V109.0M763.5 107.0V108.0M764.5 107.0V110.0M765.5 107.0V109.0M766.5 107.0V109.0M767.5 107.0V109.0M768.5 108.0V109.0M769.5 107.0V109.0M770.5 108.0V109.0M771.5 108.0V109.0M772.5 108.0V109.0M773.5 107.0V109.0M774.5 107.0V109.0M775.5 107.0V108.0M776.5 107.0V109.0M777.5 107.0V109.0M778.5 107.0V109.0M779.5 107.0V110.0M780.5 107.0V109.0M781.5 108.0V109.0M782.5 107.0V109.0M783.5 108.0V109.0M784.5 107.0V109.0M785.5 106.0V109.0M786.5 107.0V109.0M787.5 108.0V109.0M788.5 107.0V109.0M789.5 107.0V109.0M790.5 107.0V109.0M791.5 107.0V109.0M792.5 108.0V109.0M793.5 107.0V109.0M794.5 107.0V109.0M795.5 107.0V109.0M796.5 107.0V109.0M797.5 107.0V109.0M798.5 107.0V108.0M799.5 107.0V109.0M800.5 107.0V108.0M801.5 107.0V109.0M802.5 107.0V109.0M803.5 107.0V109.0M804.5 107.0V110.0M805.5 108.0V109.0M806.5 107.0V108.0M807.5 107.0V109.0M808.5 107.0V109.0M809.5 107.0V108.0M810.5 107.0V109.0M811.5 107.0V109.0M812.5 107.0V109.0M813.5 107.0V109.0M814.5 107.0V110.0M815.5 108.0V109.0M816.5 107.0V109.0M817.5 107.0V108.0M818.5 107.0V109.0M819.5 107.0V109.0M820.5 107.0V109.0M821.5 107.0V109.0M822.5 107.0V109.0M823.5 107.0V109.0M824.5 107.0V108.0M825.5 107.0V109.0M826.5 107.0V109.0M827.5 107.0V108.0M828.5 107.0V109.0M829.5 106.0V109.0M830.5 107.0V109.0M831.5 107.0V108.0M832.5 107.0V109.0M833.5 108.0V109.0M834.5 107.0V109.0M835.5 107.0V109.0M836.5 107.0V109.0M837.5 107.0V108.0M838.5 107.0V108.0M839.5 107.0V109.0M840.5 107.0V109.0M841.5 108.0V109.0M842.5 107.0V109.0M843.5 107.0V109.0M844.5 107.0V109.0M845.5 107.0V109.0M846.5 107.0V109.0M847.5 107.0V109.0M848.5 107.0V109.0M849.5 106.0V109.0M850.5 107.0V109.0M851.5 107.0V109.0M852.5 107.0V108.0M853.5 108.0V109.0M854.5 108.0V109.0M855.5 107.0V109.0M856.5 107.0V109.0M857.5 107.0V109.0M858.5 107.0V109.0M859.5 107.0V109.0M860.5 107.0V108.0M861.5 107.0V110.0M862.5 108.0V109.0M863.5 107.0V108.0M864.5 107.0V108.0M865.5 107.0V109.0M866.5 107.0V109.0M867.5 107.0V109.0M868.5 107.0V108.0M869.5 107.0V109.0M870.5 107.0V109.0M871.5 107.0V109.0M872.5 108.0V109.0M873.5 108.0V109.0M874.5 107.0V108.0M875.5 107.0V109.0M876.5 108.0V109.0M877.5 106.0V109.0M878.5 107.0V109.0M879.5 107.0V109.0M880.5 107.0V109.0M881.5 107.0V109.0M882.5 107.0V108.0M883.5 107.0V110.0M884.5 107.0V109.0M885.5 107.0V108.0M886.5 108.0V109.0M887.5 107.0V109.0M888.5 106.0V109.0M889.5 107.0V108.0M890.5 107.0V109.0M891.5 107.0V109.0M892.5 107.0V109.0M893.5 107.0V109.0M894.5 107.0V108.0M895.5 107.0V109.0M896.5 106.0V109.0M897.5 107.0V109.0M898.5 107.0V109.0M899.5 107.0V109.0M900.5 107.0V110.0M901.5 107.0V109.0M902.5 106.0V109.0M903.5 107.0V109.0M904.5 107.0V109.0M905.5 107.0V109.0M906.5 107.0V109.0M907.5 106.0V109.0M908.5 107.0V110.0M909.5 108.0V109.0M910.5 107.0V108.0M911.5 107.0V109.0M912.5 108.0V109.0M913.5 107.0V109.0M914.5 108.0V109.0M915.5 107.0V109.0M916.5 107.0V109.0M917.5 108.0V109.0M918.5 107.0V109.0M919.5 107.0V109.0M920.5 107.0V109.0M921.5 107.0V109.0M922.5 107.0V109.0M923.5 107.0V110.0M924.5 106.0V109.0M925.5 107.0V108.0M926.5 107.0V109.0M927.5 107.0V108.0M928.5 107.0V108.0M929.5 107.0V109.0M930.5 107.0V109.0M931.5 108.0V109.0M932.5 107.0V109.0M933.5 107.0V109.0M934.5 107.0V109.0M935.5 107.0V109.0M936.5 107.0V109.0M937.5 107.0V109.0M938.5 107.0V109.0M939.5 107.0V109.0M940.5 107.0V109.0M941.5 107.0V109.0M942.5 107.0V109.0M943.5 107.0V108.0M944.5 107.0V109.0M945.5 107.0V108.0M946.5 107.0V109.0M947.5 107.0V110.0M948.5 107.0V108.0M949.5 107.0V109.0M950.5 107.0V109.0M951.5 107.0V108.0M952.5 107.0V108.0M953.5 108.0V109.0M954.5 108.0V109.0M955.5 107.0V109.0M956.5 107.0V110.0M957.5 108.0V109.0M958.5 108.0V109.0M959.5 107.0V109.0M960.5 107.0V109.0M961.5 107.0V109.0M962.5 106.0V109.0M963.5 107.0V109.0M964.5 107.0V109.0M965.5 107.0V109.0M966.5 106.0V109.0M967.5 107.0V109.0M968.5 107.0V109.0M969.5 107.0V108.0M970.5 106.0V109.0M971.5 107.0V108.0M972.5 107.0V109.0M973.5 108.0V109.0M974.5 107.0V109.0M975.5 107.0V109.0M976.5 107.0V109.0M977.5 107.0V109.0M978.5 107.0V109.0M979.5 107.0V109.0M980.5 107.0V109.0M981.5 107.0V109.0M982.5 107.0V108.0M983.5 107.0V109.0M984.5 107.0V109.0M985.5 107.0V109.0M986.5 107.0V109.0M987.5 107.0V109.0M988.5 107.0V109.0M989.5 106.0V109.0M990.5 107.0V110.0M991.5 107.0V108.0M992.5 108.0V109.0M993.5 107.0V109.0M994.5 108.0V109.0M995.5 107.0V109.0M996.5 107.0V108.0M997.5 107.0V109.0M998.5 106.0V109.0M999.5 107.0V109.0M1000.5 108.0V109.0M1001.5 107.0V109.0M1002.5 107.0V109.0M1003.5 107.0V110.0M1004.5 107.0V109.0M1005.5 107.0V109.0M1006.5 107.0V109.0M1007.5 107.0V109.0M1008.5 107.0V109.0M1009.5 108.0V109.0M1010.5 108.0V109.0M1011.5 107.0V109.0M1012.5 107.0V109.0M1013.5 107.0V109.0M1014.5 107.0V109.0M1015.5 107.0V109.0M1016.5 108.0V109.0M1017.5 107.0V109.0M1018.5 107.0V109.0M1019.5 106.0V109.0M1020.5 107.0V110.0M1021.5 107.0V109.0M1022.5 107.0V109.0M1023.5 107.0V109.0M1024.5 106.0V109.0M1025.5 108.0V109.0M1026.5 107.0V109.0M1027.5 108.0V109.0M1028.5 107.0V109.0M1029.5 107.0V109.0M1030.5 107.0V109.0M1031.5 108.0V109.0M1032.5 107.0V110.0M1033.5 107.0V109.0M1034.5 107.0V108.0M1035.5 107.0V109.0M1036.5 108.0V109.0M1037.5 107.0V109.0M1038.5 107.0V109.0M1039.5 107.0V108.0M1040.5 107.0V109.0M1041.5 106.0V109.0M1042.5 108.0V109.0M1043.5 107.0V108.0M1044.5 107.0V109.0M1045.5 107.0V108.0M1046.5 106.0V109.0M1047.5 107.0V109.0M1048.5 107.0V109.0M1049.5 107.0V109.0M1050.5 107.0V109.0M1051.5 107.0V108.0M1052.5 107.0V109.0M1053.5 107.0V109.0M1054.5 107.0V109.0M1055.5 107.0V108.0M1056.5 108.0V109.0M1057.5 107.0V109.0M1058.5 107.0V108.0M1059.5 108.0V109.0M1060.5 107.0V109.0M1061.5 107.0V109.0M1062.5 107.0V109.0M1063.5 106.0V109.0M1064.5 107.0V108.0M1065.5 107.0V109.0M1066.5 107.0V108.0M1067.5 107.0V109.0M1068.5 107.0V110.0M1069.5 107.0V109.0M1070.5 107.0V109.0M1071.5 107.0V109.0M1072.5 107.0V109.0M1073.5 107.0V109.0M1074.5 107.0V109.0M1075.5 107.0V109.0M1076.5 108.0V109.0M1077.5 107.0V109.0M1078.5 107.0V109.0M1079.5 108.0V109.0M1080.5 107.0V109.0M1081.5 107.0V109.0M1082.5 107.0V109.0M1083.5 107.0V109.0M1084.5 108.0V109.0M1085.5 107.0V110.0M1086.5 107.0V109.0M1087.5 107.0V109.0M1088.5 108.0V109.0" stroke="#808080" stroke-width="1" fill="none"/><path d="M140.5 188.0V191.0M141.5 188.0V191.0M142.5 190.0V191.0M143.5 189.0V191.0M144.5 189.0V191.0M145.5 189.0V191.0M146.5 189.0V191.0M147.5 189.0V191.0M148.5 189.0V191.0M149.5 189.0V191.0M150.5 189.0V191.0M151.5 189.0V191.0M152.5 189.0V191.0M153.5 189.0V191.0M154.5 189.0V190.0M155.5 189.0V191.0M156.5 189.0V191.0M157.5 189.0V190.0M158.5 189.0V191.0M159.5 189.0V191.0M160.5 190.0V191.0M161.5 189.0V191.0M162.5 189.0V190.0M163.5 189.0V190.0M164.5 189.0V192.0M165.5 189.0V191.0M166.5 190.0V191.0M167.5 189.0V191.0M168.5 189.0V191.0M169.5 189.0V190.0M170.5 189.0V191.0M171.5 189.0V191.0M172.5 189.0V191.0M173.5 189.0V190.0M174.5 189.0V191.0M175.5 189.0V191.0M176.5 189.0V190.0M177.5 189.0V191.0M178.5 189.0V191.0M179.5 189.0V191.0M180.5 190.0V191.0M181.5 189.0V191.0M182.5 189.0V191.0M183.5 189.0V191.0M184.5 189.0V191.0M185.5 189.0V191.0M186.5 189.0V191.0M187.5 190.0V191.0M188.5 189.0V191.0M189.5 189.0V191.0M190.5 189.0V191.0M191.5 189.0V191.0M192.5 190.0V191.0M193.5 189.0V191.0M194.5 189.0V191.0M195.5 189.0V191.0M196.5 190.0V191.0M197.5 189.0V190.0M198.5 190.0V191.0M199.5 189.0V191.0M200.5 189.0V191.0M201.5 188.0V191.0M202.5 189.0V191.0M203.5 188.0V191.0M204.5 189.0V191.0M205.5 189.0V192.0M206.5 189.0V191.0M207.5 189.0V191.0M208.5 189.0V191.0M209.5 190.0V191.0M210.5 189.0V190.0M211.5 189.0V192.0M212.5 190.0V191.0M213.5 188.0V191.0M214.5 189.0V191.0M215.5 189.0V192.0M216.5 189.0V190.0M217.5 189.0V191.0M218.5 189.0V192.0M219.5 189.0V191.0M220.5 189.0V191.0M221.5 189.0V191.0M222.5 189.0V191.0M223.5 189.0V191.0M224.5 188.0V191.0M225.5 189.0V192.0M226.5 189.0V191.0M227.5 189.0V191.0M228.5 189.0V191.0M229.5 189.0V191.0M230.5 189.0V191.0M231.5 190.0V191.0M232.5 189.0V191.0M233.5 189.0V191.0M234.5 188.0V191.0M235.5 189.0V191.0M236.5 189.0V191.0M237.5 190.0V191.0M238.5 190.0V191.0M239.5 190.0V191.0M240.5 189.0V190.0M241.5 189.0V191.0M242.5 189.0V190.0M243.5 190.0V191.0M244.5 189.0V190.0M245.5 189.0V191.0M246.5 189.0V191.0M247.5 189.0V191.0M248.5 190.0V191.0M249.5 189.0V191.0M250.5 189.0V191.0M251.5 190.0V191.0M252.5 189.0V191.0M253.5 189.0V190.0M254.5 189.0V191.0M255.5 189.0V191.0M256.5 190.0V191.0M257.5 189.0V191.0M258.5 189.0V192.0M259.5 189.0V191.0M260.5 189.0V191.0M261.5 189.0V191.0M262.5 189.0V191.0M263.5 189.0V191.0M264.5 189.0V191.0M265.5 189.0V191.0M266.5 189.0V190.0M267.5 189.0V191.0M268.5 189.0V191.0M269.5 190.0V191.0M270.5 189.0V191.0M271.5 190.0V191.0M272.5 189.0V191.0M273.5 189.0V190.0M274.5 189.0V191.0M275.5 189.0V191.0M276.5 189.0V191.0M277.5 189.0V191.0M278.5 189.0V190.0M279.5 189.0V191.0M280.5 189.0V190.0M281.5 189.0V191.0M282.5 189.0V191.0M283.5 189.0V191.0M284.5 189.0V191.0M285.5 190.0V191.0M286.5 189.0V191.0M287.5 190.0V191.0M288.5 190.0V191.0M289.5 189.0V191.0M290.5 190.0V191.0M291.5 189.0V190.0M292.5 189.0V190.0M293.5 189.0V191.0M294.5 189.0V191.0M295.5 189.0V191.0M296.5 189.0V191.0M297.5 189.0V192.0M298.5 189.0V191.0M299.5 189.0V191.0M300.5 189.0V191.0M301.5 190.0V191.0M302.5 189.0V191.0M303.5 189.0V191.0M304.5 189.0V191.0M305.5 189.0V191.0M306.5 189.0V191.0M307.5 189.0V191.0M308.5 189.0V191.0M309.5 190.0V191.0M310.5 189.0V191.0M311.5 189.0V191.0M312.5 189.0V191.0M313.5 189.0V191.0M314.5 189.0V191.0M315.5 189.0V191.0M316.5 190.0V191.0M317.5 189.0V191.0M318.5 190.0V191.0M319.5 189.0V191.0M320.5 189.0V192.0M321.5 189.0V190.0M322.5 189.0V191.0M323.5 190.0V191.0M324.5 189.0V191.0M325.5 189.0V191.0M326.5 189.0V191.0M327.5 190.0V191.0M328.5 189.0V191.0M329.5 189.0V190.0M330.5 189.0V191.0M331.5 189.0V190.0M332.5 189.0V191.0M333.5 189.0V191.0M334.5 188.0V191.0M335.5 189.0V190.0M336.5 189.0V191.0M337.5 189.0V192.0M338.5 188.0V191.0M339.5 189.0V191.0M340.5 189.0V191.0M341.5 189.0V190.0M342.5 189.0V191.0M343.5 189.0V190.0M344.5 189.0V191.0M345.5 189.0V190.0M346.5 189.0V191.0M347.5 190.0V191.0M348.5 190.0V191.0M349.5 189.0V190.0M350.5 189.0V191.0M351.5 189.0V191.0M352.5 189.0V191.0M353.5 189.0V191.0M354.5 190.0V191.0M355.5 189.0V191.0M356.5 189.0V191.0M357.5 189.0V191.0M358.5 189.0V190.0M359.5 189.0V191.0M360.5 190.0V191.0M361.5 189.0V191.0M362.5 189.0V191.0M363.5 189.0V190.0M364.5 189.0V190.0M365.5 188.0V191.0M366.5 189.0V191.0M367.5 190.0V191.0M368.5 189.0V192.0M369.5 189.0V192.0M370.5 189.0V191.0M371.5 189.0V191.0M372.5 190.0V191.0M373.5 190.0V191.0M374.5 189.0V191.0M375.5 189.0V191.0M376.5 189.0V190.0M377.5 190.0V191.0M378.5 189.0V191.0M379.5 189.0V191.0M380.5 189.0V191.0M381.5 189.0V191.0M382.5 189.0V191.0M383.5 189.0V191.0M384.5 188.3V191.4M385.5 188.4V191.2M386.5 188.6V192.0M387.5 188.5V191.0M388.5 187.9V191.7M389.5 187.8V191.6M390.5 188.3V191.4M391.5 188.4V192.0M392.5 188.0V191.6M393.5 188.7V190.6M394.5 188.3V191.2M395.5 188.9V190.6M396.5 189.5V191.1M397.5 188.3V191.5M398.5 188.6V191.4M399.5 189.1V190.7M400.5 189.0V190.0M401.5 189.0V191.0M402.5 189.0V191.0M403.5 189.0V191.0M404.5 189.0V191.0M405.5 189.0V191.0M406.5 189.0V191.0M407.5 189.0V191.0M408.5 189.0V191.0M409.5 189.0V190.0M410.5 189.0V191.0M411.5 189.0V190.0M412.5 190.0V191.0M413.5 189.0V190.0M414.5 189.0V191.0M415.5 189.0V191.0M416.5 189.0V191.0M417.5 189.0V192.0M418.5 189.0V191.0M419.5 189.0V191.0M420.5 189.0V191.0M421.5 189.0V191.0M422.5 190.0V191.0M423.5 189.0V191.0M424.5 189.0V192.0M425.5 189.0V191.0M426.5 190.0V191.0M427.5 189.0V191.0M428.5 188.0V191.0M429.5 189.0V191.0M430.5 189.0V190.0M431.5 188.0V191.0M432.5 189.0V190.0M433.5 189.0V191.0M434.5 188.0V191.0M435.5 189.0V192.0M436.5 189.0V191.0M437.5 190.0V191.0M438.5 189.0V191.0M439.5 189.0V191.0M440.5 190.0V191.0M441.5 189.0V190.0M442.5 189.0V192.0M443.5 189.0V190.0M444.5 189.0V191.0M445.5 189.0V191.0M446.5 189.0V191.0M447.5 189.0V192.0M448.5 189.0V190.0M449.5 190.0V191.0M450.5 189.0V191.0M451.5 189.0V190.0M452.5 189.0V190.0M453.5 189.0V191.0M454.5 187.9V191.0M455.5 188.6V190.9M456.5 183.1V191.9M457.5 175.9V191.3M458.5 172.2V196.9M459.5 172.3V197.9M460.5 166.8V204.8M461.5 156.0V204.8M462.5 163.2V202.5M463.5 149.0V218.0M464.5 150.0V230.0M465.5 152.0V229.0M466.5 180.5V204.1M467.5 177.1V202.0M468.5 175.6V204.7M469.5 178.0V203.7M470.5 184.1V198.2M471.5 177.1V200.7M472.5 176.9V196.3M473.5 178.5V201.5M474.5 184.5V195.4M475.5 179.4V203.6M476.5 178.6V199.1M477.5 179.3V203.0M478.5 178.7V200.8M479.5 178.0V204.2M480.5 176.0V203.2M481.5 181.9V200.9M482.5 176.0V201.8M483.5 175.0V203.2M484.5 184.0V199.5M485.5 181.0V196.2M486.5 179.5V203.1M487.5 177.0V194.7M488.5 182.8V197.4M489.5 177.1V197.8M490.5 184.4V198.1M491.5 183.7V193.0M492.5 180.9V199.9M493.5 180.1V197.9M494.5 185.5V196.5M495.5 182.0V197.0M496.5 183.7V192.3M497.5 181.4V193.6M498.5 182.5V194.6M499.5 182.4V194.0M500.5 187.0V194.4M501.5 184.4V196.0M502.5 185.1V195.3M503.5 185.4V195.5M504.5 187.0V196.1M505.5 182.4V191.5M506.5 183.0V195.5M507.5 184.2V191.9M508.5 184.1V195.3M509.5 185.0V196.3M510.5 183.0V194.3M511.5 183.3V191.8M512.5 187.3V193.6M513.5 186.2V196.0M514.5 185.7V193.9M515.5 185.9V195.9M516.5 187.3V194.5M517.5 186.3V192.5M518.5 187.8V191.5M519.5 188.8V192.1M520.5 188.1V191.3M521.5 187.3V192.1M522.5 184.6V194.3M523.5 186.5V194.8M524.5 188.3V191.3M525.5 186.9V191.5M526.5 184.3V192.2M527.5 185.1V191.5M528.5 188.8V193.2M529.5 186.5V191.6M530.5 184.8V195.5M531.5 186.5V195.6M532.5 184.4V191.3M533.5 186.3V193.8M534.5 186.3V191.8M535.5 187.4V192.9M536.5 185.5V191.1M537.5 188.1V191.7M538.5 186.0V191.2M539.5 188.9V191.2M540.5 188.8V192.1M541.5 185.5V191.8M542.5 188.8V193.2M543.5 188.3V192.7M544.5 186.4V192.1M545.5 186.5V192.9M546.5 185.7V193.7M547.5 185.4V193.6M548.5 188.5V192.3M549.5 186.3V193.8M550.5 186.6V194.1M551.5 186.0V192.4M552.5 187.1V191.1M553.5 187.9V193.4M554.5 185.5V194.1M555.5 188.0V191.3M556.5 185.7V192.9M557.5 188.8V191.0M558.5 185.8V192.5M559.5 188.9V195.0M560.5 187.5V193.4M561.5 186.3V191.3M562.5 187.8V191.1M563.5 187.5V191.8M564.5 186.6V191.0M565.5 188.9V191.6M566.5 189.1V191.6M567.5 185.8V193.7M568.5 189.0V193.4M569.5 188.9V191.1M570.5 187.6V191.2M571.5 189.0V190.9M572.5 189.0V191.0M573.5 186.5V190.8M574.5 188.2V191.0M575.5 187.5V190.8M576.5 188.7V192.5M577.5 189.3V191.3M578.5 188.9V191.5M579.5 188.0V190.7M580.5 187.1V191.0M581.5 187.6V190.8M582.5 189.3V190.8M583.5 189.3V190.9M584.5 189.2V190.7M585.5 187.3V191.5M586.5 188.6V191.4M587.5 187.6V190.7M588.5 189.3V191.9M589.5 189.4V191.4M590.5 188.3V192.5M591.5 189.4V191.1M592.5 189.1V191.6M593.5 189.4V192.1M594.5 187.1V191.4M595.5 188.2V192.3M596.5 187.6V192.3M597.5 188.8V190.6M598.5 187.9V192.3M599.5 188.2V190.9M600.5 187.3V191.5M601.5 189.2V192.0M602.5 189.3V190.7M603.5 187.6V190.6M604.5 187.8V191.0M605.5 188.7V191.6M606.5 187.7V190.7M607.5 189.4V191.2M608.5 189.3V191.0M609.5 189.4V190.5M610.5 188.8V190.5M611.5 189.3V190.9M612.5 189.5V191.8M613.5 187.9V190.5M614.5 188.2V190.6M615.5 188.5V190.5M616.5 188.4V192.1M617.5 189.4V190.5M618.5 189.3V191.8M619.5 188.4V190.5M620.5 188.1V191.5M621.5 188.0V192.1M622.5 189.5V191.4M623.5 189.6V190.5M624.5 189.0V190.5M625.5 189.5V190.7M626.5 189.2V191.8M627.5 189.0V191.0M628.5 188.7V190.5M629.5 188.6V191.3M630.5 188.6V190.7M631.5 189.1V190.4M632.5 189.3V191.0M633.5 188.3V191.6M634.5 189.4V191.2M635.5 188.6V191.7M636.5 189.0V190.5M637.5 188.6V190.3M638.5 189.2V190.7M639.5 188.6V190.9M640.5 189.0V191.0M641.5 189.0V191.0M642.5 189.0V191.0M643.5 190.0V191.0M644.5 190.0V191.0M645.5 189.0V191.0M646.5 189.0V191.0M647.5 189.0V191.0M648.5 189.0V191.0M649.5 189.0V191.0M650.5 189.0V191.0M651.5 189.0V191.0M652.5 189.0V190.0M653.5 189.0V191.0M654.5 189.0V191.0M655.5 189.0V191.0M656.5 188.0V191.0M657.5 189.0V191.0M658.5 189.0V191.0M659.5 189.0V191.0M660.5 189.0V191.0M661.5 189.0V191.0M662.5 190.0V191.0M663.5 189.0V191.0M664.5 189.0V190.0M665.5 189.0V191.0M666.5 189.0V191.0M667.5 189.0V191.0M668.5 189.0V190.0M669.5 189.0V191.0M670.5 189.0V190.0M671.5 189.0V191.0M672.5 190.0V191.0M673.5 189.0V191.0M674.5 189.0V191.0M675.5 189.0V192.0M676.5 189.0V191.0M677.5 189.0V191.0M678.5 189.0V191.0M679.5 189.0V190.0M680.5 189.0V191.0M681.5 189.0V190.0M682.5 189.0V191.0M683.5 189.0V191.0M684.5 189.0V190.0M685.5 189.0V191.0M686.5 189.0V191.0M687.5 189.0V192.0M688.5 189.0V190.0M689.5 189.0V191.0M690.5 188.0V191.0M691.5 189.0V191.0M692.5 190.0V191.0M693.5 189.0V191.0M694.5 189.0V191.0M695.5 189.0V190.0M696.5 190.0V191.0M697.5 189.0V190.0M698.5 189.0V191.0M699.5 189.0V191.0M700.5 189.0V191.0M701.5 189.0V191.0M702.5 189.0V191.0M703.5 189.0V190.0M704.5 189.0V191.0M705.5 189.0V191.0M706.5 189.0V191.0M707.5 189.0V190.0M708.5 189.0V190.0M709.5 189.0V191.0M710.5 189.0V192.0M711.5 189.0V192.0M712.5 190.0V191.0M713.5 190.0V191.0M714.5 189.0V190.0M715.5 189.0V191.0M716.5 189.0V191.0M717.5 189.0V191.0M718.5 189.0V191.0M719.5 189.0V190.0M720.5 189.0V191.0M721.5 189.0V191.0M722.5 189.0V190.0M723.5 189.0V191.0M724.5 189.0V191.0M725.5 189.0V191.0M726.5 189.0V191.0M727.5 190.0V191.0M728.5 189.0V191.0M729.5 189.0V190.0M730.5 190.0V191.0M731.5 189.0V190.0M732.5 189.0V191.0M733.5 189.0V192.0M734.5 189.0V191.0M735.5 189.0V191.0M736.5 190.0V191.0M737.5 189.0V190.0M738.5 189.0V191.0M739.5 190.0V191.0M740.5 190.0V191.0M741.5 189.0V190.0M742.5 189.0V191.0M743.5 189.0V190.0M744.5 189.0V190.0M745.5 190.0V191.0M746.5 189.0V191.0M747.5 188.0V191.0M748.5 189.0V190.0M749.5 189.0V191.0M750.5 189.0V191.0M751.5 189.0V191.0M752.5 189.0V190.0M753.5 189.0V191.0M754.5 189.0V192.0M755.5 189.0V191.0M756.5 190.0V191.0M757.5 190.0V191.0M758.5 189.0V191.0M759.5 189.0V191.0M760.5 189.0V191.0M761.5 189.0V191.0M762.5 189.0V191.0M763.5 189.0V190.0M764.5 189.0V191.0M765.5 189.0V191.0M766.5 189.0V190.0M767.5 189.0V191.0M768.5 189.0V191.0M769.5 189.0V191.0M770.5 190.0V191.0M771.5 189.0V190.0M772.5 189.0V190.0M773.5 189.0V191.0M774.5 189.0V191.0M775.5 189.0V191.0M776.5 189.0V190.0M777.5 189.0V191.0M778.5 189.0V191.0M779.5 189.0V191.0M780.5 189.0V191.0M781.5 189.0V191.0M782.5 189.0V191.0M783.5 189.0V191.0M784.5 189.0V191.0M785.5 189.0V191.0M786.5 189.0V191.0M787.5 189.0V191.0M788.5 189.0V191.0M789.5 189.0V191.0M790.5 189.0V191.0M791.5 190.0V191.0M792.5 189.0V191.0M793.5 189.0V191.0M794.5 189.0V191.0M795.5 190.0V191.0M796.5 189.0V190.0M797.5 189.0V191.0M798.5 189.0V192.0M799.5 189.0V190.0M800.5 190.0V191.0M801.5 190.0V191.0M802.5 189.0V191.0M803.5 189.0V191.0M804.5 190.0V191.0M805.5 189.0V191.0M806.5 188.0V191.0M807.5 189.0V191.0M808.5 188.0V191.0M809.5 189.0V190.0M810.5 189.0V191.0M811.5 190.0V191.0M812.5 189.0V191.0M813.5 189.0V191.0M814.5 189.0V191.0M815.5 190.0V191.0M816.5 189.0V191.0M817.5 189.0V191.0M818.5 189.0V191.0M819.5 189.0V191.0M820.5 189.0V191.0M821.5 189.0V191.0M822.5 189.0V191.0M823.5 189.0V191.0M824.5 189.0V191.0M825.5 189.0V191.0M826.5 189.0V191.0M827.5 189.0V191.0M828.5 189.0V191.0M829.5 189.0V191.0M830.5 189.0V191.0M831.5 188.0V191.0M832.5 189.0V192.0M833.5 189.0V191.0M834.5 189.0V190.0M835.5 189.0V191.0M836.5 189.0V191.0M837.5 189.0V191.0M838.5 189.0V191.0M839.5 189.0V191.0M840.5 189.0V191.0M841.5 189.0V191.0M842.5 189.0V191.0M843.5 189.0V192.0M844.5 190.0V191.0M845.5 189.0V191.0M846.5 189.0V192.0M847.5 189.0V191.0M848.5 190.0V191.0M849.5 189.0V191.0M850.5 190.0V191.0M851.5 189.0V191.0M852.5 190.0V191.0M853.5 189.0V191.0M854.5 189.0V191.0M855.5 189.0V191.0M856.5 190.0V191.0M857.5 190.0V191.0M858.5 189.0V191.0M859.5 189.0V191.0M860.5 189.0V191.0M861.5 189.0V191.0M862.5 189.0V191.0M863.5 189.0V191.0M864.5 189.0V191.0M865.5 189.0V191.0M866.5 188.0V191.0M867.5 189.0V190.0M868.5 190.0V191.0M869.5 189.0V191.0M870.5 189.0V191.0M871.5 189.0V191.0M872.5 189.0V191.0M873.5 189.0V191.0M874.5 189.0V191.0M875.5 188.0V191.0M876.5 189.0V191.0M877.5 189.0V191.0M878.5 189.0V191.0M879.5 190.0V191.0M880.5 189.0V191.0M881.5 189.0V191.0M882.5 189.0V190.0M883.5 189.0V191.0M884.5 189.0V191.0M885.5 190.0V191.0M886.5 189.0V191.0M887.5 188.0V191.0M888.5 190.0V191.0M889.5 190.0V191.0M890.5 190.0V191.0M891.5 189.0V191.0M892.5 189.0V190.0M893.5 189.0V191.0M894.5 189.0V191.0M895.5 189.0V191.0M896.5 190.0V191.0M897.5 189.0V191.0M898.5 189.0V191.0M899.5 189.0V191.0M900.5 189.0V191.0M901.5 190.0V191.0M902.5 189.0V191.0M903.5 189.0V191.0M904.5 189.0V192.0M905.5 189.0V190.0M906.5 189.0V191.0M907.5 189.0V191.0M908.5 189.0V191.0M909.5 189.0V190.0M910.5 189.0V191.0M911.5 189.0V191.0M912.5 188.0V191.0M913.5 189.0V191.0M914.5 189.0V191.0M915.5 189.0V190.0M916.5 190.0V191.0M917.5 189.0V191.0M918.5 190.0V191.0M919.5 189.0V191.0M920.5 189.0V191.0M921.5 189.0V191.0M922.5 189.0V192.0M923.5 190.0V191.0M924.5 188.0V191.0M925.5 189.0V191.0M926.5 189.0V190.0M927.5 189.0V191.0M928.5 189.0V190.0M929.5 189.0V191.0M930.5 189.0V191.0M931.5 189.0V192.0M932.5 189.0V191.0M933.5 189.0V191.0M934.5 190.0V191.0M935.5 189.0V191.0M936.5 189.0V191.0M937.5 189.0V191.0M938.5 189.0V191.0M939.5 189.0V191.0M940.5 189.0V191.0M941.5 189.0V191.0M942.5 189.0V190.0M943.5 189.0V190.0M944.5 189.0V191.0M945.5 189.0V191.0M946.5 189.0V191.0M947.5 189.0V191.0M948.5 189.0V191.0M949.5 190.0V191.0M950.5 189.0V191.0M951.5 190.0V191.0M952.5 189.0V191.0M953.5 189.0V190.0M954.5 190.0V191.0M955.5 189.0V192.0M956.5 189.0V191.0M957.5 189.0V191.0M958.5 189.0V191.0M959.5 189.0V191.0M960.5 189.0V190.0M961.5 189.0V192.0M962.5 190.0V191.0M963.5 189.0V191.0M964.5 189.0V191.0M965.5 189.0V190.0M966.5 189.0V191.0M967.5 189.0V191.0M968.5 189.0V191.0M969.5 189.0V191.0M970.5 189.0V191.0M971.5 188.0V191.0M972.5 189.0V191.0M973.5 189.0V191.0M974.5 189.0V191.0M975.5 189.0V191.0M976.5 189.0V191.0M977.5 189.0V190.0M978.5 189.0V191.0M979.5 189.0V191.0M980.5 190.0V191.0M981.5 190.0V191.0M982.5 189.0V191.0M983.5 189.0V190.0M984.5 190.0V191.0M985.5 189.0V190.0M986.5 189.0V190.0M987.5 190.0V191.0M988.5 189.0V191.0M989.5 189.0V191.0M990.5 189.0V191.0M991.5 189.0V191.0M992.5 189.0V191.0M993.5 189.0V191.0M994.5 189.0V191.0M995.5 189.0V191.0M996.5 189.0V191.0M997.5 189.0V191.0M998.5 189.0V191.0M999.5 189.0V190.0M1000.5 190.0V191.0M1001.5 189.0V191.0M1002.5 189.0V190.0M1003.5 189.0V191.0M1004.5 189.0V191.0M1005.5 189.0V190.0M1006.5 190.0V191.0M1007.5 189.0V191.0M1008.5 189.0V191.0M1009.5 189.0V190.0M1010.5 189.0V190.0M1011.5 189.0V191.0M1012.5 189.0V191.0M1013.5 189.0V191.0M1014.5 189.0V191.0M1015.5 190.0V191.0M1016.5 189.0V191.0M1017.5 189.0V191.0M1018.5 188.0V191.0M1019.5 189.0V191.0M1020.5 189.0V191.0M1021.5 190.0V191.0M1022.5 189.0V190.0M1023.5 189.0V191.0M1024.5 189.0V191.0M1025.5 189.0V191.0M1026.5 189.0V190.0M1027.5 189.0V191.0M1028.5 189.0V191.0M1029.5 188.0V191.0M1030.5 189.0V191.0M1031.5 189.0V191.0M1032.5 189.0V191.0M1033.5 189.0V191.0M1034.5 189.0V190.0M1035.5 189.0V190.0M1036.5 189.0V191.0M1037.5 189.0V191.0M1038.5 189.0V191.0M1039.5 189.0V191.0M1040.5 189.0V191.0M1041.5 189.0V191.0M1042.5 189.0V191.0M1043.5 189.0V191.0M1044.5 189.0V192.0M1045.5 189.0V191.0M1046.5 189.0V191.0M1047.5 189.0V191.0M1048.5 189.0V190.0M1049.5 189.0V191.0M1050.5 189.0V191.0M1051.5 189.0V190.0M1052.5 189.0V191.0M1053.5 189.0V191.0M1054.5 190.0V191.0M1055.5 189.0V191.0M1056.5 189.0V191.0M1057.5 189.0V191.0M1058.5 189.0V191.0M1059.5 190.0V191.0M1060.5 189.0V191.0M1061.5 189.0V190.0M1062.5 189.0V191.0M1063.5 189.0V191.0M1064.5 189.0V190.0M1065.5 190.0V191.0M1066.5 189.0V191.0M1067.5 189.0V191.0M1068.5 189.0V191.0M1069.5 189.0V191.0M1070.5 189.0V191.0M1071.5 189.0V192.0M1072.5 189.0V191.0M1073.5 189.0V190.0M1074.5 190.0V191.0M1075.5 189.0V191.0M1076.5 190.0V191.0M1077.5 189.0V191.0M1078.5 190.0V191.0M1079.5 189.0V191.0M1080.5 190.0V191.0M1081.5 190.0V191.0M1082.5 190.0V191.0M1083.5 190.0V191.0M1084.5 189.0V191.0M1085.5 189.0V191.0M1086.5 189.0V191.0M1087.5 189.0V190.0M1088.5 189.0V191.0" stroke="#808080" stroke-width="1" fill="none"/><rect x="140.5" y="231.5" width="948" height="81" fill="none" stroke="#000" stroke-width="1" stroke-dasharray="4,2" shape-rendering="crispEdges"/><text x="141" y="77" font-size="10" fill="#000" font-family="Liberation Sans" letter-spacing="0.25">6853.9</text><text x="141" y="146" font-size="10" fill="#000" font-family="Liberation Sans" letter-spacing="0.25">-0.0</text><text x="141" y="159" font-size="10" fill="#000" font-family="Liberation Sans" letter-spacing="0.25">7334.0</text><text x="141" y="228" font-size="10" fill="#000" font-family="Liberation Sans" letter-spacing="0.25">-0.0</text><rect x="383" y="67" width="2" height="123" fill="#a00000"/><text x="386.5" y="77.5" font-size="10" fill="#a00000" stroke="#a00000" stroke-width="0.12" font-family="Liberation Sans" letter-spacing="0.68">P&lt;T&gt;</text><rect x="381" y="190" width="2" height="123" fill="#0000a0"/><text x="384.5" y="312" font-size="10" fill="#00008c" stroke="#00008c" stroke-width="0.12" font-family="Liberation Sans" letter-spacing="0.35">Pn</text><rect x="402" y="190" width="2" height="123" fill="#0000a0"/><text x="405.5" y="312" font-size="10" fill="#00008c" stroke="#00008c" stroke-width="0.12" font-family="Liberation Sans" letter-spacing="0.35">Pg</text><rect x="462" y="190" width="2" height="123" fill="#0000a0"/><text x="465.5" y="312" font-size="10" fill="#00008c" stroke="#00008c" stroke-width="0.12" font-family="Liberation Sans" letter-spacing="0.35">Sn</text><rect x="493" y="190" width="2" height="123" fill="#0000a0"/><text x="496.5" y="312" font-size="10" fill="#00008c" stroke="#00008c" stroke-width="0.12" font-family="Liberation Sans" letter-spacing="0.35">Sg</text><rect x="140" y="313" width="949" height="2" fill="#fff"/><rect x="242" y="67" width="1" height="248" fill="#c8c8ff"/><rect x="380" y="67" width="1" height="248" fill="#c8c8ff"/><rect x="518" y="67" width="1" height="248" fill="#c8c8ff"/><rect x="655" y="67" width="1" height="248" fill="#c8c8ff"/><rect x="793" y="67" width="1" height="248" fill="#c8c8ff"/><rect x="931" y="67" width="1" height="248" fill="#c8c8ff"/><rect x="1068" y="67" width="1" height="248" fill="#c8c8ff"/><rect x="277" y="67" width="1" height="248" fill="#ff0000"/><rect x="140" y="315" width="949" height="1" fill="#000"/><rect x="151" y="316" width="1" height="4" fill="#000"/><rect x="173" y="316" width="1" height="4" fill="#000"/><rect x="196" y="316" width="1" height="4" fill="#000"/><rect x="219" y="316" width="1" height="4" fill="#000"/><rect x="242" y="316" width="1" height="7" fill="#000"/><rect x="265" y="316" width="1" height="4" fill="#000"/><rect x="288" y="316" width="1" height="4" fill="#000"/><rect x="311" y="316" width="1" height="4" fill="#000"/><rect x="334" y="316" width="1" height="4" fill="#000"/><rect x="357" y="316" width="1" height="4" fill="#000"/><rect x="380" y="316" width="1" height="7" fill="#000"/><rect x="403" y="316" width="1" height="4" fill="#000"/><rect x="426" y="316" width="1" height="4" fill="#000"/><rect x="449" y="316" width="1" height="4" fill="#000"/><rect x="472" y="316" width="1" height="4" fill="#000"/><rect x="495" y="316" width="1" height="4" fill="#000"/><rect x="518" y="316" width="1" height="7" fill="#000"/><rect x="541" y="316" width="1" height="4" fill="#000"/><rect x="564" y="316" width="1" height="4" fill="#000"/><rect x="586" y="316" width="1" height="4" fill="#000"/><rect x="609" y="316" width="1" height="4" fill="#000"/><rect x="632" y="316" width="1" height="4" fill="#000"/><rect x="655" y="316" width="1" height="7" fill="#000"/><rect x="678" y="316" width="1" height="4" fill="#000"/><rect x="701" y="316" width="1" height="4" fill="#000"/><rect x="724" y="316" width="1" height="4" fill="#000"/><rect x="747" y="316" width="1" height="4" fill="#000"/><rect x="770" y="316" width="1" height="4" fill="#000"/><rect x="793" y="316" width="1" height="7" fill="#000"/><rect x="816" y="316" width="1" height="4" fill="#000"/><rect x="839" y="316" width="1" height="4" fill="#000"/><rect x="862" y="316" width="1" height="4" fill="#000"/><rect x="885" y="316" width="1" height="4" fill="#000"/><rect x="908" y="316" width="1" height="4" fill="#000"/><rect x="931" y="316" width="1" height="7" fill="#000"/><rect x="954" y="316" width="1" height="4" fill="#000"/><rect x="977" y="316" width="1" height="4" fill="#000"/><rect x="999" y="316" width="1" height="4" fill="#000"/><rect x="1022" y="316" width="1" height="4" fill="#000"/><rect x="1045" y="316" width="1" height="4" fill="#000"/><rect x="1068" y="316" width="1" height="7" fill="#000"/><text x="242.5" y="334" font-size="11" fill="#111" text-anchor="middle" font-family="Liberation Sans" letter-spacing="0.9">02:24:00</text><text x="380.5" y="334" font-size="11" fill="#111" text-anchor="middle" font-family="Liberation Sans" letter-spacing="0.9">02:25:00</text><text x="518.5" y="334" font-size="11" fill="#111" text-anchor="middle" font-family="Liberation Sans" letter-spacing="0.9">02:26:00</text><text x="655.5" y="334" font-size="11" fill="#111" text-anchor="middle" font-family="Liberation Sans" letter-spacing="0.9">02:27:00</text><text x="793.5" y="334" font-size="11" fill="#111" text-anchor="middle" font-family="Liberation Sans" letter-spacing="0.9">02:28:00</text><text x="931.5" y="334" font-size="11" fill="#111" text-anchor="middle" font-family="Liberation Sans" letter-spacing="0.9">02:29:00</text><text x="242.5" y="347" font-size="11" fill="#111" text-anchor="middle" font-family="Liberation Sans" letter-spacing="0.9">2011-02-15</text><rect x="140" y="369" width="949" height="34" fill="#a0b0f0"/><rect x="242" y="369" width="1" height="34" fill="#c8c8e8"/><rect x="380" y="369" width="1" height="34" fill="#c8c8e8"/><rect x="518" y="369" width="1" height="34" fill="#c8c8e8"/><rect x="655" y="369" width="1" height="34" fill="#c8c8e8"/><rect x="793" y="369" width="1" height="34" fill="#c8c8e8"/><rect x="931" y="369" width="1" height="34" fill="#c8c8e8"/><rect x="1068" y="369" width="1" height="34" fill="#c8c8e8"/><rect x="277" y="369" width="1" height="34" fill="#ff0000"/><rect x="383" y="369" width="2" height="17" fill="#a00000"/><text x="386.5" y="379.5" font-size="10" fill="#a00000" stroke="#a00000" stroke-width="0.12" font-family="Liberation Sans" letter-spacing="0.68">P&lt;T&gt;</text><rect x="381" y="386" width="2" height="17" fill="#0000a0"/><text x="384.5" y="401" font-size="10" fill="#00008c" stroke="#00008c" stroke-width="0.12" font-family="Liberation Sans" letter-spacing="0.35">Pn</text><rect x="402" y="386" width="2" height="17" fill="#0000a0"/><text x="405.5" y="401" font-size="10" fill="#00008c" stroke="#00008c" stroke-width="0.12" font-family="Liberation Sans" letter-spacing="0.35">Pg</text><rect x="462" y="386" width="2" height="17" fill="#0000a0"/><text x="465.5" y="401" font-size="10" fill="#00008c" stroke="#00008c" stroke-width="0.12" font-family="Liberation Sans" letter-spacing="0.35">Sn</text><rect x="493" y="386" width="2" height="17" fill="#0000a0"/><text x="496.5" y="401" font-size="10" fill="#00008c" stroke="#00008c" stroke-width="0.12" font-family="Liberation Sans" letter-spacing="0.35">Sg</text><rect x="140" y="403" width="949" height="2" fill="#c8c8d4"/><rect x="140" y="405" width="949" height="34" fill="#f8f878"/><rect x="140.5" y="405.5" width="948" height="33" fill="none" stroke="#ffff80" stroke-width="1"/><rect x="242" y="405" width="1" height="34" fill="#c8c8e8"/><rect x="380" y="405" width="1" height="34" fill="#c8c8e8"/><rect x="518" y="405" width="1" height="34" fill="#c8c8e8"/><rect x="655" y="405" width="1" height="34" fill="#c8c8e8"/><rect x="793" y="405" width="1" height="34" fill="#c8c8e8"/><rect x="931" y="405" width="1" height="34" fill="#c8c8e8"/><rect x="1068" y="405" width="1" height="34" fill="#c8c8e8"/><rect x="277" y="405" width="1" height="34" fill="#ff0000"/><rect x="387" y="405" width="2" height="17" fill="#a00000"/><text x="390.5" y="415.5" font-size="10" fill="#a00000" stroke="#a00000" stroke-width="0.12" font-family="Liberation Sans" letter-spacing="0.68">P&lt;T&gt;</text><rect x="387" y="422" width="2" height="17" fill="#0000a0"/><text x="390.5" y="437" font-size="10" fill="#00008c" stroke="#00008c" stroke-width="0.12" font-family="Liberation Sans" letter-spacing="0.35">Pn</text><rect x="410" y="422" width="2" height="17" fill="#0000a0"/><text x="413.5" y="437" font-size="10" fill="#00008c" stroke="#00008c" stroke-width="0.12" font-family="Liberation Sans" letter-spacing="0.35">Pg</text><rect x="473" y="422" width="2" height="17" fill="#0000a0"/><text x="476.5" y="437" font-size="10" fill="#00008c" stroke="#00008c" stroke-width="0.12" font-family="Liberation Sans" letter-spacing="0.35">Sn</text><rect x="507" y="422" width="2" height="17" fill="#0000a0"/><text x="510.5" y="437" font-size="10" fill="#00008c" stroke="#00008c" stroke-width="0.12" font-family="Liberation Sans" letter-spacing="0.35">Sg</text><rect x="140" y="439" width="949" height="2" fill="#c8c8d4"/><rect x="140" y="441" width="949" height="34" fill="#ffff80"/><rect x="242" y="441" width="1" height="34" fill="#c8c8e8"/><rect x="380" y="441" width="1" height="34" fill="#c8c8e8"/><rect x="518" y="441" width="1" height="34" fill="#c8c8e8"/><rect x="655" y="441" width="1" height="34" fill="#c8c8e8"/><rect x="793" y="441" width="1" height="34" fill="#c8c8e8"/><rect x="931" y="441" width="1" height="34" fill="#c8c8e8"/><rect x="1068" y="441" width="1" height="34" fill="#c8c8e8"/><rect x="277" y="441" width="1" height="34" fill="#ff0000"/><rect x="395" y="441" width="2" height="17" fill="#a00000"/><text x="398.5" y="451.5" font-size="10" fill="#a00000" stroke="#a00000" stroke-width="0.12" font-family="Liberation Sans" letter-spacing="0.68">P&lt;T&gt;</text><rect x="395" y="458" width="2" height="17" fill="#0000a0"/><text x="398.5" y="473" font-size="10" fill="#00008c" stroke="#00008c" stroke-width="0.12" font-family="Liberation Sans" letter-spacing="0.35">Pn</text><rect x="422" y="458" width="2" height="17" fill="#0000a0"/><text x="425.5" y="473" font-size="10" fill="#00008c" stroke="#00008c" stroke-width="0.12" font-family="Liberation Sans" letter-spacing="0.35">Pg</text><rect x="488" y="458" width="2" height="17" fill="#0000a0"/><text x="491.5" y="473" font-size="10" fill="#00008c" stroke="#00008c" stroke-width="0.12" font-family="Liberation Sans" letter-spacing="0.35">Sn</text><rect x="528" y="458" width="2" height="17" fill="#0000a0"/><text x="531.5" y="473" font-size="10" fill="#00008c" stroke="#00008c" stroke-width="0.12" font-family="Liberation Sans" letter-spacing="0.35">Sg</text><rect x="140" y="475" width="949" height="2" fill="#c8c8d4"/><rect x="140" y="477" width="949" height="34" fill="#f8f878"/><rect x="140.5" y="477.5" width="948" height="33" fill="none" stroke="#ffff80" stroke-width="1"/><rect x="242" y="477" width="1" height="34" fill="#c8c8e8"/><rect x="380" y="477" width="1" height="34" fill="#c8c8e8"/><rect x="518" y="477" width="1" height="34" fill="#c8c8e8"/><rect x="655" y="477" width="1" height="34" fill="#c8c8e8"/><rect x="793" y="477" width="1" height="34" fill="#c8c8e8"/><rect x="931" y="477" width="1" height="34" fill="#c8c8e8"/><rect x="1068" y="477" width="1" height="34" fill="#c8c8e8"/><rect x="277" y="477" width="1" height="34" fill="#ff0000"/><rect x="400" y="477" width="2" height="17" fill="#a00000"/><text x="403.5" y="487.5" font-size="10" fill="#a00000" stroke="#a00000" stroke-width="0.12" font-family="Liberation Sans" letter-spacing="0.68">P&lt;T&gt;</text><rect x="401" y="494" width="2" height="17" fill="#0000a0"/><text x="404.5" y="509" font-size="10" fill="#00008c" stroke="#00008c" stroke-width="0.12" font-family="Liberation Sans" letter-spacing="0.35">Pn</text><rect x="430" y="494" width="2" height="17" fill="#0000a0"/><text x="433.5" y="509" font-size="10" fill="#00008c" stroke="#00008c" stroke-width="0.12" font-family="Liberation Sans" letter-spacing="0.35">Pg</text><rect x="499" y="494" width="2" height="17" fill="#0000a0"/><text x="502.5" y="509" font-size="10" fill="#00008c" stroke="#00008c" stroke-width="0.12" font-family="Liberation Sans" letter-spacing="0.35">Sn</text><rect x="542" y="494" width="2" height="17" fill="#0000a0"/><text x="545.5" y="509" font-size="10" fill="#00008c" stroke="#00008c" stroke-width="0.12" font-family="Liberation Sans" letter-spacing="0.35">Sg</text><rect x="140" y="511" width="949" height="2" fill="#c8c8d4"/><rect x="140" y="513" width="949" height="34" fill="#ffff80"/><rect x="242" y="513" width="1" height="34" fill="#c8c8e8"/><rect x="380" y="513" width="1" height="34" fill="#c8c8e8"/><rect x="518" y="513" width="1" height="34" fill="#c8c8e8"/><rect x="655" y="513" width="1" height="34" fill="#c8c8e8"/><rect x="793" y="513" width="1" height="34" fill="#c8c8e8"/><rect x="931" y="513" width="1" height="34" fill="#c8c8e8"/><rect x="1068" y="513" width="1" height="34" fill="#c8c8e8"/><rect x="277" y="513" width="1" height="34" fill="#ff0000"/><rect x="407" y="513" width="2" height="17" fill="#a00000"/><text x="410.5" y="523.5" font-size="10" fill="#a00000" stroke="#a00000" stroke-width="0.12" font-family="Liberation Sans" letter-spacing="0.68">P&lt;T&gt;</text><rect x="408" y="530" width="2" height="17" fill="#0000a0"/><text x="411.5" y="545" font-size="10" fill="#00008c" stroke="#00008c" stroke-width="0.12" font-family="Liberation Sans" letter-spacing="0.35">Pn</text><rect x="440" y="530" width="2" height="17" fill="#0000a0"/><text x="443.5" y="545" font-size="10" fill="#00008c" stroke="#00008c" stroke-width="0.12" font-family="Liberation Sans" letter-spacing="0.35">Pg</text><rect x="511" y="530" width="2" height="17" fill="#0000a0"/><text x="514.5" y="545" font-size="10" fill="#00008c" stroke="#00008c" stroke-width="0.12" font-family="Liberation Sans" letter-spacing="0.35">Sn</text><rect x="559" y="530" width="2" height="17" fill="#0000a0"/><text x="562.5" y="545" font-size="10" fill="#00008c" stroke="#00008c" stroke-width="0.12" font-family="Liberation Sans" letter-spacing="0.35">Sg</text><rect x="140" y="547" width="949" height="2" fill="#c8c8d4"/><rect x="140" y="549" width="949" height="34" fill="#f8f878"/><rect x="140.5" y="549.5" width="948" height="33" fill="none" stroke="#ffff80" stroke-width="1"/><rect x="242" y="549" width="1" height="34" fill="#c8c8e8"/><rect x="380" y="549" width="1" height="34" fill="#c8c8e8"/><rect x="518" y="549" width="1" height="34" fill="#c8c8e8"/><rect x="655" y="549" width="1" height="34" fill="#c8c8e8"/><rect x="793" y="549" width="1" height="34" fill="#c8c8e8"/><rect x="931" y="549" width="1" height="34" fill="#c8c8e8"/><rect x="1068" y="549" width="1" height="34" fill="#c8c8e8"/><rect x="277" y="549" width="1" height="34" fill="#ff0000"/><rect x="418" y="549" width="2" height="17" fill="#a00000"/><text x="421.5" y="559.5" font-size="10" fill="#a00000" stroke="#a00000" stroke-width="0.12" font-family="Liberation Sans" letter-spacing="0.68">P&lt;T&gt;</text><rect x="418" y="566" width="2" height="17" fill="#0000a0"/><text x="421.5" y="581" font-size="10" fill="#00008c" stroke="#00008c" stroke-width="0.12" font-family="Liberation Sans" letter-spacing="0.35">Pn</text><rect x="453" y="566" width="2" height="17" fill="#0000a0"/><text x="456.5" y="581" font-size="10" fill="#00008c" stroke="#00008c" stroke-width="0.12" font-family="Liberation Sans" letter-spacing="0.35">Pg</text><rect x="528" y="566" width="2" height="17" fill="#0000a0"/><text x="531.5" y="581" font-size="10" fill="#00008c" stroke="#00008c" stroke-width="0.12" font-family="Liberation Sans" letter-spacing="0.35">Sn</text><rect x="582" y="566" width="2" height="17" fill="#0000a0"/><text x="585.5" y="581" font-size="10" fill="#00008c" stroke="#00008c" stroke-width="0.12" font-family="Liberation Sans" letter-spacing="0.35">Sg</text><rect x="140" y="583" width="949" height="2" fill="#c8c8d4"/><rect x="140" y="585" width="949" height="34" fill="#ffff80"/><rect x="242" y="585" width="1" height="34" fill="#c8c8e8"/><rect x="380" y="585" width="1" height="34" fill="#c8c8e8"/><rect x="518" y="585" width="1" height="34" fill="#c8c8e8"/><rect x="655" y="585" width="1" height="34" fill="#c8c8e8"/><rect x="793" y="585" width="1" height="34" fill="#c8c8e8"/><rect x="931" y="585" width="1" height="34" fill="#c8c8e8"/><rect x="1068" y="585" width="1" height="34" fill="#c8c8e8"/><rect x="277" y="585" width="1" height="34" fill="#ff0000"/><rect x="418" y="585" width="2" height="17" fill="#a00000"/><text x="421.5" y="595.5" font-size="10" fill="#a00000" stroke="#a00000" stroke-width="0.12" font-family="Liberation Sans" letter-spacing="0.68">P&lt;T&gt;</text><rect x="418" y="602" width="2" height="17" fill="#0000a0"/><text x="421.5" y="617" font-size="10" fill="#00008c" stroke="#00008c" stroke-width="0.12" font-family="Liberation Sans" letter-spacing="0.35">Pn</text><rect x="453" y="602" width="2" height="17" fill="#0000a0"/><text x="456.5" y="617" font-size="10" fill="#00008c" stroke="#00008c" stroke-width="0.12" font-family="Liberation Sans" letter-spacing="0.35">Pg</text><rect x="529" y="602" width="2" height="17" fill="#0000a0"/><text x="532.5" y="617" font-size="10" fill="#00008c" stroke="#00008c" stroke-width="0.12" font-family="Liberation Sans" letter-spacing="0.35">Sn</text><rect x="582" y="602" width="2" height="17" fill="#0000a0"/><text x="585.5" y="617" font-size="10" fill="#00008c" stroke="#00008c" stroke-width="0.12" font-family="Liberation Sans" letter-spacing="0.35">Sg</text><rect x="140" y="619" width="949" height="2" fill="#c8c8d4"/><rect x="140" y="621" width="949" height="34" fill="#f8f878"/><rect x="140.5" y="621.5" width="948" height="33" fill="none" stroke="#ffff80" stroke-width="1"/><rect x="242" y="621" width="1" height="34" fill="#c8c8e8"/><rect x="380" y="621" width="1" height="34" fill="#c8c8e8"/><rect x="518" y="621" width="1" height="34" fill="#c8c8e8"/><rect x="655" y="621" width="1" height="34" fill="#c8c8e8"/><rect x="793" y="621" width="1" height="34" fill="#c8c8e8"/><rect x="931" y="621" width="1" height="34" fill="#c8c8e8"/><rect x="1068" y="621" width="1" height="34" fill="#c8c8e8"/><rect x="277" y="621" width="1" height="34" fill="#ff0000"/><rect x="437" y="621" width="2" height="17" fill="#a00000"/><text x="440.5" y="631.5" font-size="10" fill="#a00000" stroke="#a00000" stroke-width="0.12" font-family="Liberation Sans" letter-spacing="0.68">P&lt;T&gt;</text><rect x="438" y="638" width="2" height="17" fill="#0000a0"/><text x="441.5" y="653" font-size="10" fill="#00008c" stroke="#00008c" stroke-width="0.12" font-family="Liberation Sans" letter-spacing="0.35">Pn</text><rect x="481" y="638" width="2" height="17" fill="#0000a0"/><text x="484.5" y="653" font-size="10" fill="#00008c" stroke="#00008c" stroke-width="0.12" font-family="Liberation Sans" letter-spacing="0.35">Pg</text><rect x="565" y="638" width="2" height="17" fill="#0000a0"/><text x="568.5" y="653" font-size="10" fill="#00008c" stroke="#00008c" stroke-width="0.12" font-family="Liberation Sans" letter-spacing="0.35">Sn</text><rect x="630" y="638" width="2" height="17" fill="#0000a0"/><text x="633.5" y="653" font-size="10" fill="#00008c" stroke="#00008c" stroke-width="0.12" font-family="Liberation Sans" letter-spacing="0.35">Sg</text><rect x="140" y="655" width="949" height="2" fill="#c8c8d4"/><rect x="140" y="657" width="949" height="34" fill="#ffff80"/><rect x="242" y="657" width="1" height="34" fill="#c8c8e8"/><rect x="380" y="657" width="1" height="34" fill="#c8c8e8"/><rect x="518" y="657" width="1" height="34" fill="#c8c8e8"/><rect x="655" y="657" width="1" height="34" fill="#c8c8e8"/><rect x="793" y="657" width="1" height="34" fill="#c8c8e8"/><rect x="931" y="657" width="1" height="34" fill="#c8c8e8"/><rect x="1068" y="657" width="1" height="34" fill="#c8c8e8"/><rect x="277" y="657" width="1" height="34" fill="#ff0000"/><rect x="443" y="657" width="2" height="17" fill="#a00000"/><text x="446.5" y="667.5" font-size="10" fill="#a00000" stroke="#a00000" stroke-width="0.12" font-family="Liberation Sans" letter-spacing="0.68">P&lt;T&gt;</text><rect x="444" y="674" width="2" height="17" fill="#0000a0"/><text x="447.5" y="689" font-size="10" fill="#00008c" stroke="#00008c" stroke-width="0.12" font-family="Liberation Sans" letter-spacing="0.35">Pn</text><rect x="490" y="674" width="2" height="17" fill="#0000a0"/><text x="493.5" y="689" font-size="10" fill="#00008c" stroke="#00008c" stroke-width="0.12" font-family="Liberation Sans" letter-spacing="0.35">Pg</text><rect x="576" y="674" width="2" height="17" fill="#0000a0"/><text x="579.5" y="689" font-size="10" fill="#00008c" stroke="#00008c" stroke-width="0.12" font-family="Liberation Sans" letter-spacing="0.35">Sn</text><rect x="646" y="674" width="2" height="17" fill="#0000a0"/><text x="649.5" y="689" font-size="10" fill="#00008c" stroke="#00008c" stroke-width="0.12" font-family="Liberation Sans" letter-spacing="0.35">Sg</text><rect x="140" y="691" width="949" height="2" fill="#c8c8d4"/><rect x="140" y="693" width="949" height="34" fill="#f8f878"/><rect x="140.5" y="693.5" width="948" height="33" fill="none" stroke="#ffff80" stroke-width="1"/><rect x="242" y="693" width="1" height="34" fill="#c8c8e8"/><rect x="380" y="693" width="1" height="34" fill="#c8c8e8"/><rect x="518" y="693" width="1" height="34" fill="#c8c8e8"/><rect x="655" y="693" width="1" height="34" fill="#c8c8e8"/><rect x="793" y="693" width="1" height="34" fill="#c8c8e8"/><rect x="931" y="693" width="1" height="34" fill="#c8c8e8"/><rect x="1068" y="693" width="1" height="34" fill="#c8c8e8"/><rect x="277" y="693" width="1" height="34" fill="#ff0000"/><rect x="456" y="693" width="2" height="17" fill="#a00000"/><text x="459.5" y="703.5" font-size="10" fill="#a00000" stroke="#a00000" stroke-width="0.12" font-family="Liberation Sans" letter-spacing="0.68">P&lt;T&gt;</text><rect x="455" y="710" width="2" height="17" fill="#0000a0"/><text x="458.5" y="725" font-size="10" fill="#00008c" stroke="#00008c" stroke-width="0.12" font-family="Liberation Sans" letter-spacing="0.35">Pn</text><rect x="505" y="710" width="2" height="17" fill="#0000a0"/><text x="508.5" y="725" font-size="10" fill="#00008c" stroke="#00008c" stroke-width="0.12" font-family="Liberation Sans" letter-spacing="0.35">Pg</text><rect x="596" y="710" width="2" height="17" fill="#0000a0"/><text x="599.5" y="725" font-size="10" fill="#00008c" stroke="#00008c" stroke-width="0.12" font-family="Liberation Sans" letter-spacing="0.35">Sn</text><rect x="672" y="710" width="2" height="17" fill="#0000a0"/><text x="675.5" y="725" font-size="10" fill="#00008c" stroke="#00008c" stroke-width="0.12" font-family="Liberation Sans" letter-spacing="0.35">Sg</text><rect x="140" y="727" width="949" height="2" fill="#c8c8d4"/><rect x="140" y="729" width="949" height="34" fill="#ffff80"/><rect x="242" y="729" width="1" height="34" fill="#c8c8e8"/><rect x="380" y="729" width="1" height="34" fill="#c8c8e8"/><rect x="518" y="729" width="1" height="34" fill="#c8c8e8"/><rect x="655" y="729" width="1" height="34" fill="#c8c8e8"/><rect x="793" y="729" width="1" height="34" fill="#c8c8e8"/><rect x="931" y="729" width="1" height="34" fill="#c8c8e8"/><rect x="1068" y="729" width="1" height="34" fill="#c8c8e8"/><rect x="277" y="729" width="1" height="34" fill="#ff0000"/><rect x="467" y="729" width="2" height="17" fill="#a00000"/><text x="470.5" y="739.5" font-size="10" fill="#a00000" stroke="#a00000" stroke-width="0.12" font-family="Liberation Sans" letter-spacing="0.68">P&lt;T&gt;</text><rect x="468" y="746" width="2" height="17" fill="#0000a0"/><text x="471.5" y="761" font-size="10" fill="#00008c" stroke="#00008c" stroke-width="0.12" font-family="Liberation Sans" letter-spacing="0.35">Pn</text><rect x="523" y="746" width="2" height="17" fill="#0000a0"/><text x="526.5" y="761" font-size="10" fill="#00008c" stroke="#00008c" stroke-width="0.12" font-family="Liberation Sans" letter-spacing="0.35">Pg</text><rect x="619" y="746" width="2" height="17" fill="#0000a0"/><text x="622.5" y="761" font-size="10" fill="#00008c" stroke="#00008c" stroke-width="0.12" font-family="Liberation Sans" letter-spacing="0.35">Sn</text><rect x="702" y="746" width="2" height="17" fill="#0000a0"/><text x="705.5" y="761" font-size="10" fill="#00008c" stroke="#00008c" stroke-width="0.12" font-family="Liberation Sans" letter-spacing="0.35">Sg</text><rect x="140" y="763" width="949" height="2" fill="#c8c8d4"/><rect x="140" y="765" width="949" height="34" fill="#f8f878"/><rect x="140.5" y="765.5" width="948" height="33" fill="none" stroke="#ffff80" stroke-width="1"/><rect x="242" y="765" width="1" height="34" fill="#c8c8e8"/><rect x="380" y="765" width="1" height="34" fill="#c8c8e8"/><rect x="518" y="765" width="1" height="34" fill="#c8c8e8"/><rect x="655" y="765" width="1" height="34" fill="#c8c8e8"/><rect x="793" y="765" width="1" height="34" fill="#c8c8e8"/><rect x="931" y="765" width="1" height="34" fill="#c8c8e8"/><rect x="1068" y="765" width="1" height="34" fill="#c8c8e8"/><rect x="277" y="765" width="1" height="34" fill="#ff0000"/><rect x="471" y="765" width="2" height="17" fill="#a00000"/><text x="474.5" y="775.5" font-size="10" fill="#a00000" stroke="#a00000" stroke-width="0.12" font-family="Liberation Sans" letter-spacing="0.68">P&lt;T&gt;</text><rect x="472" y="782" width="2" height="17" fill="#0000a0"/><text x="475.5" y="797" font-size="10" fill="#00008c" stroke="#00008c" stroke-width="0.12" font-family="Liberation Sans" letter-spacing="0.35">Pn</text><rect x="529" y="782" width="2" height="17" fill="#0000a0"/><text x="532.5" y="797" font-size="10" fill="#00008c" stroke="#00008c" stroke-width="0.12" font-family="Liberation Sans" letter-spacing="0.35">Pg</text><rect x="626" y="782" width="2" height="17" fill="#0000a0"/><text x="629.5" y="797" font-size="10" fill="#00008c" stroke="#00008c" stroke-width="0.12" font-family="Liberation Sans" letter-spacing="0.35">Sn</text><rect x="713" y="782" width="2" height="17" fill="#0000a0"/><text x="716.5" y="797" font-size="10" fill="#00008c" stroke="#00008c" stroke-width="0.12" font-family="Liberation Sans" letter-spacing="0.35">Sg</text><rect x="140" y="799" width="949" height="2" fill="#c8c8d4"/><rect x="140" y="801" width="949" height="34" fill="#ffff80"/><rect x="242" y="801" width="1" height="34" fill="#c8c8e8"/><rect x="380" y="801" width="1" height="34" fill="#c8c8e8"/><rect x="518" y="801" width="1" height="34" fill="#c8c8e8"/><rect x="655" y="801" width="1" height="34" fill="#c8c8e8"/><rect x="793" y="801" width="1" height="34" fill="#c8c8e8"/><rect x="931" y="801" width="1" height="34" fill="#c8c8e8"/><rect x="1068" y="801" width="1" height="34" fill="#c8c8e8"/><rect x="277" y="801" width="1" height="34" fill="#ff0000"/><rect x="499" y="801" width="2" height="17" fill="#a00000"/><text x="502.5" y="811.5" font-size="10" fill="#a00000" stroke="#a00000" stroke-width="0.12" font-family="Liberation Sans" letter-spacing="0.68">P&lt;T&gt;</text><rect x="494" y="818" width="2" height="17" fill="#0000a0"/><text x="497.5" y="833" font-size="10" fill="#00008c" stroke="#00008c" stroke-width="0.12" font-family="Liberation Sans" letter-spacing="0.35">Pn</text><rect x="560" y="818" width="2" height="17" fill="#0000a0"/><text x="563.5" y="833" font-size="10" fill="#00008c" stroke="#00008c" stroke-width="0.12" font-family="Liberation Sans" letter-spacing="0.35">Pg</text><rect x="666" y="818" width="2" height="17" fill="#0000a0"/><text x="669.5" y="833" font-size="10" fill="#00008c" stroke="#00008c" stroke-width="0.12" font-family="Liberation Sans" letter-spacing="0.35">Sn</text><rect x="766" y="818" width="2" height="17" fill="#0000a0"/><text x="769.5" y="833" font-size="10" fill="#00008c" stroke="#00008c" stroke-width="0.12" font-family="Liberation Sans" letter-spacing="0.35">Sg</text><rect x="140" y="835" width="949" height="2" fill="#c8c8d4"/><rect x="140" y="837" width="949" height="34" fill="#f8f878"/><rect x="140.5" y="837.5" width="948" height="33" fill="none" stroke="#ffff80" stroke-width="1"/><rect x="242" y="837" width="1" height="34" fill="#c8c8e8"/><rect x="380" y="837" width="1" height="34" fill="#c8c8e8"/><rect x="518" y="837" width="1" height="34" fill="#c8c8e8"/><rect x="655" y="837" width="1" height="34" fill="#c8c8e8"/><rect x="793" y="837" width="1" height="34" fill="#c8c8e8"/><rect x="931" y="837" width="1" height="34" fill="#c8c8e8"/><rect x="1068" y="837" width="1" height="34" fill="#c8c8e8"/><rect x="277" y="837" width="1" height="34" fill="#ff0000"/><rect x="738" y="837" width="2" height="17" fill="#a00000"/><text x="741.5" y="847.5" font-size="10" fill="#a00000" stroke="#a00000" stroke-width="0.12" font-family="Liberation Sans" letter-spacing="0.68">P&lt;T&gt;</text><rect x="740" y="854" width="2" height="17" fill="#0000a0"/><text x="743.5" y="869" font-size="10" fill="#00008c" stroke="#00008c" stroke-width="0.12" font-family="Liberation Sans" letter-spacing="0.35">Pn</text><rect x="763" y="854" width="2" height="17" fill="#0000a0"/><rect x="767" y="854" width="2" height="17" fill="#0000a0"/><rect x="140" y="871" width="949" height="2" fill="#c8c8d4"/><rect x="140" y="873" width="949" height="34" fill="#ffff80"/><rect x="242" y="873" width="1" height="34" fill="#c8c8e8"/><rect x="380" y="873" width="1" height="34" fill="#c8c8e8"/><rect x="518" y="873" width="1" height="34" fill="#c8c8e8"/><rect x="655" y="873" width="1" height="34" fill="#c8c8e8"/><rect x="793" y="873" width="1" height="34" fill="#c8c8e8"/><rect x="931" y="873" width="1" height="34" fill="#c8c8e8"/><rect x="1068" y="873" width="1" height="34" fill="#c8c8e8"/><rect x="277" y="873" width="1" height="34" fill="#ff0000"/><rect x="812" y="873" width="2" height="17" fill="#a00000"/><text x="815.5" y="883.5" font-size="10" fill="#a00000" stroke="#a00000" stroke-width="0.12" font-family="Liberation Sans" letter-spacing="0.68">P&lt;T&gt;</text><rect x="809" y="890" width="2" height="17" fill="#0000a0"/><text x="812.5" y="905" font-size="10" fill="#00008c" stroke="#00008c" stroke-width="0.12" font-family="Liberation Sans" letter-spacing="0.35">P</text><rect x="821" y="890" width="2" height="17" fill="#0000a0"/><rect x="824" y="890" width="2" height="17" fill="#0000a0"/><rect x="139" y="369" width="1" height="539" fill="#c8c6d2"/><rect x="1089" y="369" width="1" height="539" fill="#c8c6d2"/><rect x="139" y="907" width="951" height="1" fill="#c8c6d2"/><text x="769.5" y="869" font-size="7.5" fill="#00008c" stroke="#00008c" stroke-width="0.2" font-family="Liberation Sans">bS</text><text x="773.5" y="866.5" font-size="7.5" fill="#00008c" stroke="#00008c" stroke-width="0.2" font-family="Liberation Sans">PP</text><text x="826" y="905" font-size="7.5" fill="#00008c" stroke="#00008c" stroke-width="0.2" font-family="Liberation Sans">bS</text><text x="830" y="902.5" font-size="7.5" fill="#00008c" stroke="#00008c" stroke-width="0.2" font-family="Liberation Sans">PP</text><rect x="821" y="897" width="1" height="9" fill="#00008c"/><rect x="140" y="915" width="949" height="1" fill="#000"/><rect x="151" y="916" width="1" height="4" fill="#000"/><rect x="173" y="916" width="1" height="4" fill="#000"/><rect x="196" y="916" width="1" height="4" fill="#000"/><rect x="219" y="916" width="1" height="4" fill="#000"/><rect x="242" y="916" width="1" height="7" fill="#000"/><rect x="265" y="916" width="1" height="4" fill="#000"/><rect x="288" y="916" width="1" height="4" fill="#000"/><rect x="311" y="916" width="1" height="4" fill="#000"/><rect x="334" y="916" width="1" height="4" fill="#000"/><rect x="357" y="916" width="1" height="4" fill="#000"/><rect x="380" y="916" width="1" height="7" fill="#000"/><rect x="403" y="916" width="1" height="4" fill="#000"/><rect x="426" y="916" width="1" height="4" fill="#000"/><rect x="449" y="916" width="1" height="4" fill="#000"/><rect x="472" y="916" width="1" height="4" fill="#000"/><rect x="495" y="916" width="1" height="4" fill="#000"/><rect x="518" y="916" width="1" height="7" fill="#000"/><rect x="541" y="916" width="1" height="4" fill="#000"/><rect x="564" y="916" width="1" height="4" fill="#000"/><rect x="586" y="916" width="1" height="4" fill="#000"/><rect x="609" y="916" width="1" height="4" fill="#000"/><rect x="632" y="916" width="1" height="4" fill="#000"/><rect x="655" y="916" width="1" height="7" fill="#000"/><rect x="678" y="916" width="1" height="4" fill="#000"/><rect x="701" y="916" width="1" height="4" fill="#000"/><rect x="724" y="916" width="1" height="4" fill="#000"/><rect x="747" y="916" width="1" height="4" fill="#000"/><rect x="770" y="916" width="1" height="4" fill="#000"/><rect x="793" y="916" width="1" height="7" fill="#000"/><rect x="816" y="916" width="1" height="4" fill="#000"/><rect x="839" y="916" width="1" height="4" fill="#000"/><rect x="862" y="916" width="1" height="4" fill="#000"/><rect x="885" y="916" width="1" height="4" fill="#000"/><rect x="908" y="916" width="1" height="4" fill="#000"/><rect x="931" y="916" width="1" height="7" fill="#000"/><rect x="954" y="916" width="1" height="4" fill="#000"/><rect x="977" y="916" width="1" height="4" fill="#000"/><rect x="999" y="916" width="1" height="4" fill="#000"/><rect x="1022" y="916" width="1" height="4" fill="#000"/><rect x="1045" y="916" width="1" height="4" fill="#000"/><rect x="1068" y="916" width="1" height="7" fill="#000"/><text x="242.5" y="934" font-size="11" fill="#111" text-anchor="middle" font-family="Liberation Sans" letter-spacing="0.9">02:24:00</text><text x="380.5" y="934" font-size="11" fill="#111" text-anchor="middle" font-family="Liberation Sans" letter-spacing="0.9">02:25:00</text><text x="518.5" y="934" font-size="11" fill="#111" text-anchor="middle" font-family="Liberation Sans" letter-spacing="0.9">02:26:00</text><text x="655.5" y="934" font-size="11" fill="#111" text-anchor="middle" font-family="Liberation Sans" letter-spacing="0.9">02:27:00</text><text x="793.5" y="934" font-size="11" fill="#111" text-anchor="middle" font-family="Liberation Sans" letter-spacing="0.9">02:28:00</text><text x="931.5" y="934" font-size="11" fill="#111" text-anchor="middle" font-family="Liberation Sans" letter-spacing="0.9">02:29:00</text><text x="242.5" y="947" font-size="11" fill="#111" text-anchor="middle" font-family="Liberation Sans" letter-spacing="0.9">2011-02-15</text><rect x="174" y="363" width="1" height="1" fill="#e4e4e4"/><rect x="173" y="362" width="1" height="1" fill="#888"/><rect x="177" y="363" width="1" height="1" fill="#e4e4e4"/><rect x="176" y="362" width="1" height="1" fill="#888"/><rect x="180" y="363" width="1" height="1" fill="#e4e4e4"/><rect x="179" y="362" width="1" height="1" fill="#888"/><rect x="424" y="363" width="1" height="1" fill="#e4e4e4"/><rect x="423" y="362" width="1" height="1" fill="#888"/><rect x="427" y="363" width="1" height="1" fill="#e4e4e4"/><rect x="426" y="362" width="1" height="1" fill="#888"/><rect x="430" y="363" width="1" height="1" fill="#e4e4e4"/><rect x="429" y="362" width="1" height="1" fill="#888"/><rect x="674" y="363" width="1" height="1" fill="#e4e4e4"/><rect x="673" y="362" width="1" height="1" fill="#888"/><rect x="677" y="363" width="1" height="1" fill="#e4e4e4"/><rect x="676" y="362" width="1" height="1" fill="#888"/><rect x="680" y="363" width="1" height="1" fill="#e4e4e4"/><rect x="679" y="362" width="1" height="1" fill="#888"/><rect x="924" y="363" width="1" height="1" fill="#e4e4e4"/><rect x="923" y="362" width="1" height="1" fill="#888"/><rect x="927" y="363" width="1" height="1" fill="#e4e4e4"/><rect x="926" y="362" width="1" height="1" fill="#888"/><rect x="930" y="363" width="1" height="1" fill="#e4e4e4"/><rect x="929" y="362" width="1" height="1" fill="#888"/><defs><linearGradient id="ng" x1="0" y1="0" x2="1" y2="1"><stop offset="0" stop-color="#2a2a2a"/><stop offset="1" stop-color="#7a7a7a"/></linearGradient></defs><path d="M74.5 223.5 L81 230.5 L68 230.5 Z" fill="url(#ng)" stroke="#333" stroke-width="0.8" stroke-linejoin="round"/><path d="M74.5 276.5 L81 269.5 L68 269.5 Z" fill="url(#ng)" stroke="#333" stroke-width="0.8" stroke-linejoin="round"/><path d="M47.5 249.5 L55 243.5 L55 255.5 Z" fill="url(#ng)" stroke="#333" stroke-width="0.8" stroke-linejoin="round"/><path d="M100.5 249.5 L93 243.5 L93 255.5 Z" fill="url(#ng)" stroke="#333" stroke-width="0.8" stroke-linejoin="round"/><path d="M74 243.5 L82 250.5 L79 250.5 L79 255.5 L76 255.5 L76 252 L72 252 L72 255.5 L69 255.5 L69 250.5 L66 250.5 Z" fill="url(#ng)" stroke="#333" stroke-width="0.8" stroke-linejoin="round"/><defs><linearGradient id="ck" x1="0" y1="0" x2="1" y2="1"><stop offset="0" stop-color="#30f030"/><stop offset="1" stop-color="#00c000"/></linearGradient></defs><path d="M18.3 332.1 L25.3 339 L41.8 331.2 L23 348.6 Z" fill="url(#ck)" stroke="#0a8a0a" stroke-width="1" stroke-linejoin="round"/><defs><radialGradient id="rx" cx="0.5" cy="0.3" r="0.75"><stop offset="0" stop-color="#f0a0a0"/><stop offset="0.45" stop-color="#d01818"/><stop offset="1" stop-color="#e00000"/></radialGradient></defs><circle cx="74" cy="339.8" r="11.6" fill="url(#rx)" stroke="#900000" stroke-width="0.9"/><path d="M68 334 L80 345.6 M80 334 L68 345.6" stroke="#fff" stroke-width="3.6" stroke-linecap="square"/><defs><linearGradient id="tg" x1="0" y1="0" x2="0" y2="1"><stop offset="0" stop-color="#8a8a8a"/><stop offset="0.45" stop-color="#111"/><stop offset="1" stop-color="#000"/></linearGradient></defs><path d="M108 332.2 L121.5 332.2 L129 340 L121.5 348 L108 348 Z" fill="url(#tg)" stroke="#000" stroke-width="0.6"/><path d="M112 336.6 L120.4 344.6 M120.4 336.6 L112 344.6" stroke="#fff" stroke-width="2.4"/><defs><linearGradient id="cap" x1="0" y1="0" x2="1" y2="1"><stop offset="0" stop-color="#ffffff"/><stop offset="1" stop-color="#c8d0f8"/></linearGradient></defs><g transform="rotate(45 1077 984)"><rect x="1069.5" y="979.5" width="15" height="9" rx="3.5" fill="url(#cap)" stroke="#7078d0" stroke-width="0.9"/><path d="M1077 979.5 V988.5" stroke="#7078d0" stroke-width="0.9"/><rect x="1067.5" y="983" width="2" height="2" fill="#8090e0"/><rect x="1084.5" y="983" width="2" height="2" fill="#8090e0"/></g><path d="M1091 997 L1103 985" stroke="#fff" stroke-width="1.2"/><path d="M1092.5 997 L1103 986.5" stroke="#444" stroke-width="1.2"/><path d="M1095 997 L1103 989" stroke="#fff" stroke-width="1.2"/><path d="M1096.5 997 L1103 990.5" stroke="#444" stroke-width="1.2"/><path d="M1099 997 L1103 993" stroke="#fff" stroke-width="1.2"/><path d="M1100.5 997 L1103 994.5" stroke="#444" stroke-width="1.2"/></svg>
<div class="t" style="left:8px;top:3.4px;font-size:11.5px;color:#111;letter-spacing:0.45px"><u>V</u>iew</div>
<div class="t" style="left:51px;top:3.4px;font-size:11.5px;color:#111;letter-spacing:0.45px"><u>N</u>avigation</div>
<div class="t" style="left:126px;top:3.4px;font-size:11.5px;color:#111;letter-spacing:0.45px"><u>P</u>icking</div>
<div class="t" style="left:181px;top:3.4px;font-size:11.5px;color:#111;letter-spacing:0.45px"><u>F</u>ilter</div>
<div class="t" style="left:225px;top:3.4px;font-size:11.5px;color:#111;letter-spacing:0.45px"><u>L</u>ocator</div>
<div class="t" style="left:14px;top:69px;font-size:15.5px;font-weight:bold;color:#111;letter-spacing:1.6px">PB06</div>
<div class="t" style="left:14px;top:89px;font-size:12.5px;color:#222;letter-spacing:0.2px">CX  BHE</div>
<div class="t" style="left:14px;top:110px;font-size:11px;color:#111;letter-spacing:0.6px">D:  2.9°</div>
<div class="t" style="left:14px;top:123px;font-size:11px;color:#111;letter-spacing:0.7px">A:  306.1°</div>
</body></html>
